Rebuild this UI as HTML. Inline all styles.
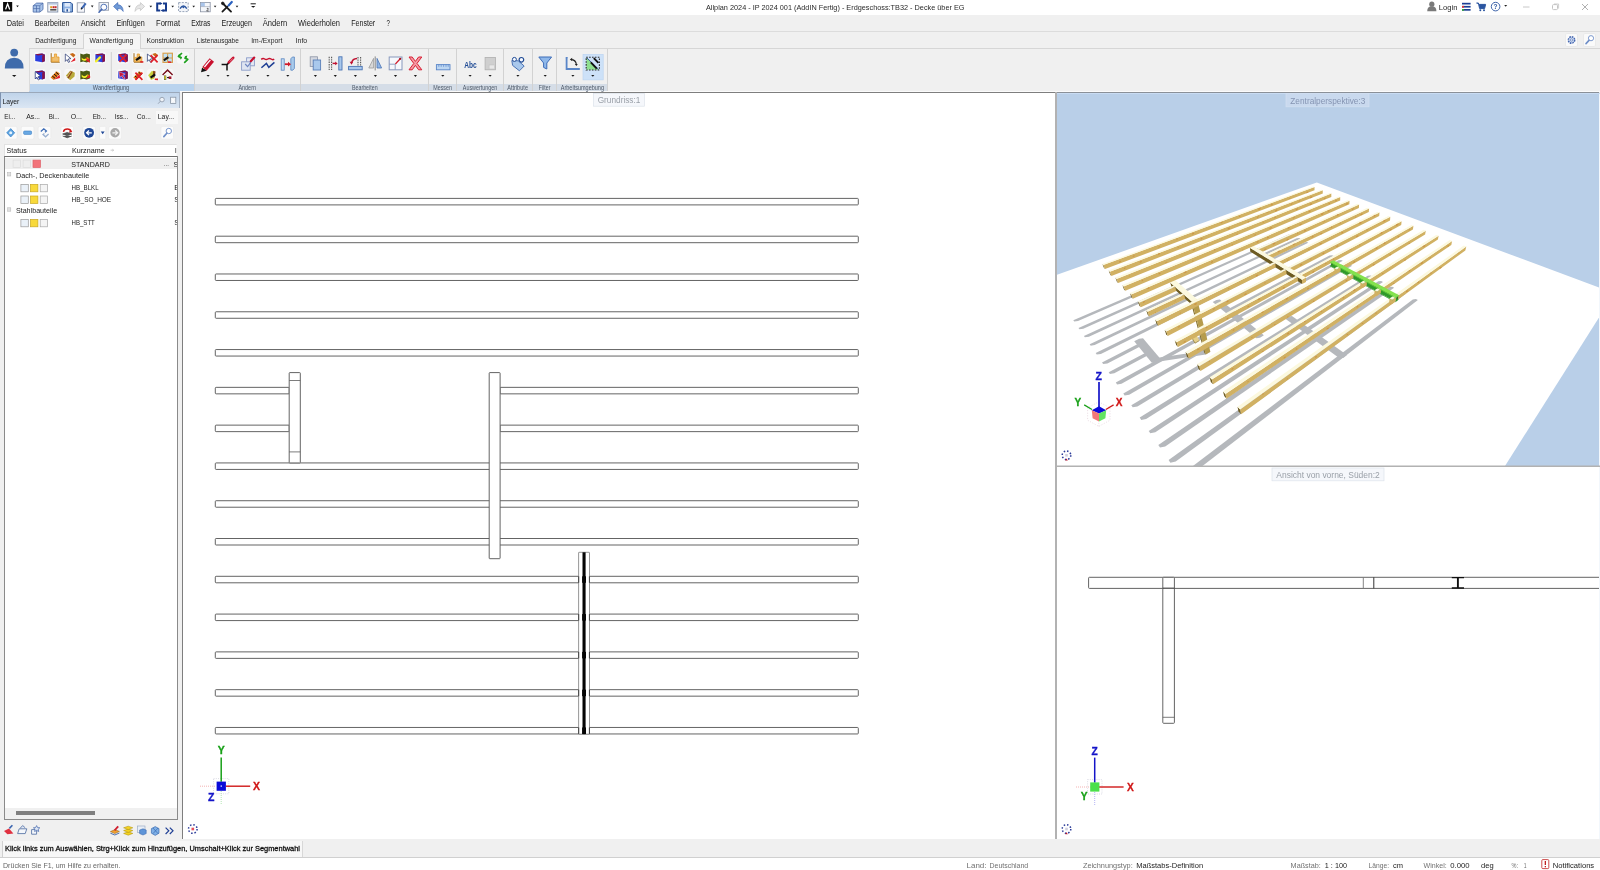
<!DOCTYPE html>
<html><head><meta charset="utf-8"><title>Allplan 2024</title>
<style>
html,body{margin:0;padding:0;}
body{width:1600px;height:870px;overflow:hidden;background:#f0f0f0;font-family:"Liberation Sans", sans-serif;position:relative;}
svg text{font-family:"Liberation Sans", sans-serif;}
</style></head><body>
<div style="position:absolute;left:0px;top:0px;width:1600px;height:14.5px;background:#ffffff;"></div>
<div style="position:absolute;left:0px;top:14.5px;width:1600px;height:77.5px;background:#f0f0f0;"></div>
<div style="position:absolute;left:0px;top:31px;width:1600px;height:1px;background:#dcdcdc;"></div>
<div style="position:absolute;left:29px;top:47.5px;width:1571px;height:1px;background:#d6d6d6;"></div>
<div style="position:absolute;left:83px;top:33px;width:57.5px;height:15.5px;background:#f5f5f5;border:1px solid #d4d4d4;border-bottom:none;border-radius:2px 2px 0 0;box-sizing:border-box;"></div>
<div style="position:absolute;left:29px;top:84px;width:578px;height:8px;background:#d5dde7;"></div>
<div style="position:absolute;left:29px;top:84px;width:165px;height:8px;background:#b9d3ee;"></div>
<div style="position:absolute;left:193.5px;top:49px;width:1px;height:42px;background:#d2d2d2;"></div>
<div style="position:absolute;left:300.3px;top:49px;width:1px;height:42px;background:#d2d2d2;"></div>
<div style="position:absolute;left:428.3px;top:49px;width:1px;height:42px;background:#d2d2d2;"></div>
<div style="position:absolute;left:456.3px;top:49px;width:1px;height:42px;background:#d2d2d2;"></div>
<div style="position:absolute;left:502.7px;top:49px;width:1px;height:42px;background:#d2d2d2;"></div>
<div style="position:absolute;left:531.5px;top:49px;width:1px;height:42px;background:#d2d2d2;"></div>
<div style="position:absolute;left:555.5px;top:49px;width:1px;height:42px;background:#d2d2d2;"></div>
<div style="position:absolute;left:606.7px;top:49px;width:1px;height:42px;background:#d2d2d2;"></div>
<div style="position:absolute;left:29px;top:49px;width:1px;height:42px;background:#dadada;"></div>
<div style="position:absolute;left:180px;top:90.6px;width:1420px;height:1.4px;background:#fbfbfb;"></div>
<div style="position:absolute;left:0px;top:839.4px;width:1600px;height:18.1px;background:#f0f0f0;"></div>
<div style="position:absolute;left:2px;top:841px;width:301px;height:15.5px;background:#f7f7f7;border-right:1px solid #d8d8d8;border-left:1px solid #d0d0d0;box-sizing:border-box;"></div>
<div style="position:absolute;left:0px;top:857.2px;width:1600px;height:12.8px;background:#ffffff;border-top:1.3px solid #d0d0d0;box-sizing:border-box;"></div>
<div style="position:absolute;left:0px;top:92px;width:182px;height:747.4px;background:#f0f0f0;"></div>
<div style="position:absolute;left:0px;top:92.4px;width:179.8px;height:15.5px;background:linear-gradient(#c0d4ea,#dbe6f3);border-right:1px solid #a8b4c4;border-top:1px solid #9aa8ba;border-left:1px solid #7f93b0;box-sizing:border-box;"></div>
<div style="position:absolute;left:155.5px;top:110.5px;width:22px;height:13px;background:#f8f8f8;"></div>
<div style="position:absolute;left:4px;top:144.3px;width:174px;height:12.4px;background:#ffffff;border:1px solid #e2e2e2;border-bottom:none;box-sizing:border-box;"></div>
<div style="position:absolute;left:4px;top:156px;width:174px;height:664px;background:#ffffff;border:1px solid #8a8a8a;border-top:1.4px solid #6e6e6e;box-sizing:border-box;"></div>
<div style="position:absolute;left:5px;top:157.6px;width:172px;height:11.6px;background:#efefef;"></div>
<div style="position:absolute;left:5px;top:808px;width:172px;height:11px;background:#f0f0f0;"></div>
<div style="position:absolute;left:16px;top:810.6px;width:78.8px;height:4.4px;background:#7f7f7f;"></div>
<div style="position:absolute;left:182px;top:92px;width:873.2px;height:747.4px;background:#ffffff;border-left:1px solid #7e7e7e;border-top:1px solid #7e7e7e;box-sizing:border-box;"></div>
<div style="position:absolute;left:1057px;top:92px;width:542px;height:375px;background:#b9cfe8;border-top:1px solid #8a9098;box-sizing:border-box;"></div>
<div style="position:absolute;left:1055px;top:92px;width:2px;height:747.4px;background:#b2b2b2;"></div>
<div style="position:absolute;left:1057px;top:467px;width:543px;height:372.4px;background:#ffffff;"></div>
<div style="position:absolute;left:1599px;top:93px;width:1px;height:746.4px;background:#f2f7fc;"></div>
<svg width="1600" height="870" viewBox="0 0 1600 870" style="position:absolute;left:0;top:0;will-change:transform">
<circle cx="1431.8" cy="4.2" r="2.6" fill="#7a7a7a"/><path d="M1427.2 11.2 q0-5 4.6-5 q4.6 0 4.6 5z" fill="#7a7a7a"/>
<rect x="1462" y="2.8" width="8.6" height="1.7" fill="#1c3f94"/><rect x="1462" y="5.9" width="8.6" height="1.7" fill="#1c3f94"/><rect x="1462" y="9" width="8.6" height="1.7" fill="#1c3f94"/><rect x="1462" y="5.9" width="2" height="1.7" fill="#d33"/><rect x="1462" y="9" width="2" height="1.7" fill="#3a3"/>
<path d="M1476.4 3 h2 l1.2 5.6 h5 l1-4.2 h-6.6" fill="#2b55a0" stroke="#2b55a0" stroke-width="1" stroke-linejoin="round"/><circle cx="1480.3" cy="10.2" r="1" fill="#2b55a0"/><circle cx="1484" cy="10.2" r="1" fill="#2b55a0"/>
<circle cx="1495.6" cy="6.6" r="4.3" fill="#fff" stroke="#2b55a0" stroke-width="0.9"/>
<path d="M1504.2 5 h3 l-1.5 1.8z" fill="#222"/>
<path d="M1523 7 h6.5" stroke="#c8c8c8" stroke-width="1"/><rect x="1552.5" y="4.6" width="5" height="5" rx="1" fill="none" stroke="#c4c4c4" stroke-width="1"/><path d="M1554 4 h4.6 v4.6" fill="none" stroke="#c4c4c4" stroke-width="0.8"/><path d="M1582 4 l6 6 M1588 4 l-6 6" stroke="#a8a8a8" stroke-width="0.9"/>
<rect x="1565.5" y="33.5" width="12" height="13" rx="1.5" fill="#fafafa" stroke="#e4e4e4" stroke-width="0.6"/><rect x="1583.5" y="33.5" width="12" height="13" rx="1.5" fill="#fafafa" stroke="#e4e4e4" stroke-width="0.6"/>
<circle cx="1571.5" cy="40" r="3.2" fill="#c9d6ee" stroke="#4668b0" stroke-width="1.5" stroke-dasharray="1.6 0.9"/><circle cx="1571.5" cy="40" r="1.1" fill="#fff" stroke="#4668b0" stroke-width="0.6"/>
<circle cx="1591" cy="38.2" r="2.6" fill="#fff" stroke="#6f8fc8" stroke-width="0.9"/><path d="M1589 40.4 l-3 3.2" stroke="#6f8fc8" stroke-width="1.6" stroke-linecap="round"/>
<rect x="1541.8" y="859.6" width="7" height="9" rx="1" fill="#fff" stroke="#c02020" stroke-width="0.8"/><rect x="1544.7" y="861" width="1.3" height="4" fill="#c02020"/><rect x="1544.7" y="866" width="1.3" height="1.3" fill="#c02020"/>
<rect x="3.1" y="2" width="9.1" height="9.4" fill="#0a0a0a"/><path d="M5.6 9.4 l2-5.6 l2.1 5.6" fill="none" stroke="#fff" stroke-width="1.3"/>
<path d="M16.2 5.3999999999999995 h2.6 l-1.3 1.9z" fill="#1a1a1a"/>
<g transform="translate(38.2,7.2) scale(1)"><path d="M-5 -1.5 l3.4-2.6 h6.4 v6.4 l-3.2 2.6 h-6.6z" fill="#a9c4ea" stroke="#4a6aa8" stroke-width="0.8"/><path d="M-5 1.4 h6.6 M-1.7 -1.6 v6.6 M1.6 -1.6 l3.2-2.5 M-5 -1.5 h6.6 v6.4" fill="none" stroke="#4a6aa8" stroke-width="0.7"/></g>
<g transform="translate(52.8,7.2) scale(1)"><rect x="-5" y="-4.6" width="10" height="9.4" fill="#f4f6fa" stroke="#7f8fa8" stroke-width="0.9"/><rect x="-5" y="-4.6" width="10" height="2" fill="#b8c6dc"/><rect x="-2.6" y="-1" width="2" height="2" fill="#e0a020"/><rect x="-0.2" y="-1" width="2" height="2" fill="#d02828"/><rect x="2" y="-1" width="1.8" height="2" fill="#c03030"/><rect x="-2.6" y="1.8" width="6.2" height="1.6" fill="#555"/></g>
<g transform="translate(67.4,7.2) scale(1)"><path d="M-4.8 -4.6 h8.4 l1.4 1.4 v8 h-9.8z" fill="#8fb2e2" stroke="#2b5498" stroke-width="1"/><rect x="-2.8" y="-4.2" width="5.6" height="3.6" fill="#dfeafa"/><rect x="-2.6" y="1.2" width="5.2" height="3.4" fill="#e6eefb"/><rect x="-1" y="2" width="1.6" height="2.4" fill="#2b5498"/></g>
<g transform="translate(81.6,7.2) scale(1)"><rect x="-4.4" y="-4.4" width="7.4" height="9.4" fill="#f6f7fa" stroke="#8a93a4" stroke-width="0.8"/><path d="M0 1.4 l4.2-5.2" stroke="#3b66b4" stroke-width="2"/><path d="M-0.6 2.2 l1-1.6" stroke="#222" stroke-width="1.2"/></g>
<path d="M90.9 5.6 h2.6 l-1.3 1.9z" fill="#1a1a1a"/>
<g transform="translate(103.6,7.2) scale(1)"><rect x="-4.6" y="-4.6" width="9.6" height="7.6" fill="#f2f4f8" stroke="#8a93a4" stroke-width="0.8"/><circle cx="0.2" cy="0" r="3" fill="#fdfdff" stroke="#5577b8" stroke-width="1"/><path d="M-2 2.2 l-2.6 2.8" stroke="#4668b0" stroke-width="1.6" stroke-linecap="round"/></g>
<g transform="translate(118.4,7.2) scale(1)"><path d="M-4.8 -0.8 l4.2-3.8 v2.2 q5 0 5.4 6.6 q-1.8-3.4-5.4-3 v2.2z" fill="#6f9ad6" stroke="#3b66b4" stroke-width="0.7"/></g>
<path d="M128.1 5.699999999999999 h2.6 l-1.3 1.9z" fill="#1a1a1a"/>
<g transform="translate(139.8,7.2) scale(1)"><path d="M4.8 -0.8 l-4.2-3.8 v2.2 q-5 0 -5.4 6.6 q1.8-3.4 5.4-3 v2.2z" fill="#e6e6e6" stroke="#c2c2c2" stroke-width="0.7"/></g>
<path d="M149.5 5.699999999999999 h2.6 l-1.3 1.9z" fill="#1a1a1a"/>
<g transform="translate(161.6,7.0) scale(1)"><path d="M-1.4 -3.6 h-3 v7.2 h3 M1.4 -3.6 h3 v7.2 h-3" fill="none" stroke="#163a8c" stroke-width="2"/><path d="M-1.8 -5 l2.8 1.4 l-2.8 1.6z M1.8 5 l-2.8-1.4 l2.8-1.6z" fill="#163a8c"/></g>
<path d="M171.39999999999998 5.699999999999999 h2.6 l-1.3 1.9z" fill="#1a1a1a"/>
<g transform="translate(183.4,7.0) scale(1)"><rect x="-4.8" y="-4.4" width="9.6" height="9" fill="#f4f6fa" stroke="#7f8fa8" stroke-width="0.8" stroke-dasharray="2 1.2"/><path d="M-3.4 1.6 q3.4-5 6.8 0" fill="none" stroke="#2b55a0" stroke-width="1.5"/><circle cx="0" cy="0.2" r="1" fill="#2b55a0"/></g>
<path d="M192.39999999999998 5.699999999999999 h2.6 l-1.3 1.9z" fill="#1a1a1a"/>
<g transform="translate(205.2,7.0) scale(1)"><rect x="-4.8" y="-4.6" width="9.8" height="9.4" fill="#f4f6fa" stroke="#8a93a4" stroke-width="0.8"/><rect x="-4.4" y="-4.2" width="4" height="3.6" fill="#a9c4ea"/><path d="M-4.8 -0.4 h9.8" stroke="#8a93a4" stroke-width="0.5"/><path d="M1.6 1.6 q1.6-1 1.6 0.4 l-1.8 2 h2.2" fill="none" stroke="#333" stroke-width="0.7"/></g>
<path d="M213.79999999999998 5.699999999999999 h2.6 l-1.3 1.9z" fill="#1a1a1a"/>
<g transform="translate(227,7.0) scale(1)"><path d="M-4.6 -4 l8.6 8.6" stroke="#1a1a1a" stroke-width="1.9" stroke-linecap="round"/><path d="M-4.6 4.6 l5-5" stroke="#1a1a1a" stroke-width="1.7" stroke-linecap="round"/><path d="M1.6 -1.6 l3.2-3.4" stroke="#2b62c0" stroke-width="2.2" stroke-linecap="round"/><circle cx="-4.2" cy="-3.6" r="1.3" fill="none" stroke="#1a1a1a" stroke-width="1"/></g>
<path d="M235.7 5.699999999999999 h2.6 l-1.3 1.9z" fill="#1a1a1a"/>
<path d="M250.6 3.8 h5.2" stroke="#1a1a1a" stroke-width="1"/>
<path d="M251.0 5.8999999999999995 h4.4 l-2.2 1.9z" fill="#1a1a1a"/>
<circle cx="14.2" cy="52.6" r="3.9" fill="#3f6bab"/><path d="M4.8 68.4 q0-10.6 9.4-10.6 q9.4 0 9.4 10.6z" fill="#3f6bab"/>
<path d="M12.0 75.0 h4.4 l-2.2 1.9z" fill="#1a1a1a"/>
<rect x="34" y="51.8" width="12" height="12" rx="3" fill="#fafafa" opacity="0.75"/>
<rect x="49.2" y="51.8" width="12" height="12" rx="3" fill="#fafafa" opacity="0.75"/>
<rect x="64.3" y="51.8" width="12" height="12" rx="3" fill="#fafafa" opacity="0.75"/>
<rect x="79.1" y="51.8" width="12" height="12" rx="3" fill="#fafafa" opacity="0.75"/>
<rect x="94.2" y="51.8" width="12" height="12" rx="3" fill="#fafafa" opacity="0.75"/>
<rect x="117" y="51.8" width="12" height="12" rx="3" fill="#fafafa" opacity="0.75"/>
<rect x="132" y="51.8" width="12" height="12" rx="3" fill="#fafafa" opacity="0.75"/>
<rect x="146.8" y="51.8" width="12" height="12" rx="3" fill="#fafafa" opacity="0.75"/>
<rect x="161.6" y="51.8" width="12" height="12" rx="3" fill="#fafafa" opacity="0.75"/>
<rect x="177" y="51.8" width="12" height="12" rx="3" fill="#fafafa" opacity="0.75"/>
<rect x="34" y="69.0" width="12" height="12" rx="3" fill="#fafafa" opacity="0.75"/>
<rect x="49.2" y="69.0" width="12" height="12" rx="3" fill="#fafafa" opacity="0.75"/>
<rect x="64.3" y="69.0" width="12" height="12" rx="3" fill="#fafafa" opacity="0.75"/>
<rect x="79.1" y="69.0" width="12" height="12" rx="3" fill="#fafafa" opacity="0.75"/>
<rect x="117" y="69.0" width="12" height="12" rx="3" fill="#fafafa" opacity="0.75"/>
<rect x="132" y="69.0" width="12" height="12" rx="3" fill="#fafafa" opacity="0.75"/>
<rect x="146.8" y="69.0" width="12" height="12" rx="3" fill="#fafafa" opacity="0.75"/>
<rect x="161.6" y="69.0" width="12" height="12" rx="3" fill="#fafafa" opacity="0.75"/>
<g transform="translate(40,57.8) scale(1)"><path d="M-4.8 -3.6 l7-0.8 l2.6 1.2 v6.6 l-2.6 1 l-7-1.2z" fill="#2a3fe0"/><path d="M-4.8 -3.6 l7-0.8 l2.6 1.2 l-7 0.8z" fill="#8a1244"/><path d="M2.2 -2.4 l2.6-0.8 v6.6 l-2.6 1z" fill="#8a1244"/></g>
<g transform="translate(55.2,57.8) scale(1)"><path d="M-4 -4.6 v9 h8.6" fill="none" stroke="#a06a18" stroke-width="1"/><path d="M-3.4 3.6 v-4 h2.6 v-3.4 h2.2 v3 h2.4 v4.4z" fill="#f0c070" stroke="#e69a28" stroke-width="0.8"/></g>
<g transform="translate(70.3,57.8) scale(1)"><path d="M-5.0 -3.8000000000000003 l5.6 4.6 l-2.6 0.4 l1.4 2.8 l-1.3 0.6 l-1.4-2.8 l-1.7 1.8z" fill="#fff" stroke="#1c2e6a" stroke-width="0.7"/><path d="M-0.6 -3.8 l3.2-1 l2.6 2 l-2 2.4z" fill="#c86a18"/><path d="M0.2 4.4 l4.6-4.6 l0.2 3z" fill="#e0202a"/></g>
<g transform="translate(85.1,57.8) scale(1)"><path d="M-4.8 -4.2 l3 0.8 l3.4-1 l3.2 0.8 v7 l-3.2 1.2 l-3.4-0.8 l-3 0.6z" fill="#4a5a12"/><path d="M-3.4 -0.4 q2.4 3.6 6 -0.6 l-0.4 2.8 q-3 2.4-5.6 0z" fill="#f4f02a"/><path d="M1 0 l3.6 4.4 M1.4 3.4 l3-2.6" stroke="#e0202a" stroke-width="1.4"/><path d="M1 0.6 l2.2-1.2 l0.6 2z" fill="#f08a18"/></g>
<g transform="translate(100.2,57.8) scale(1)"><path d="M-4.8 -3.6 l7-0.8 l2.6 1.2 v6.6 l-2.6 1 l-7-1.2z" fill="#2a3fe0"/><path d="M-4.8 -3.6 l7-0.8 l2.6 1.2 l-7 0.8z" fill="#8a1244"/><path d="M2.2 -2.4 l2.6-0.8 v6.6 l-2.6 1z" fill="#8a1244"/><path d="M-4.2 3.6 l4-4" stroke="#f4f02a" stroke-width="2.2" stroke-linecap="round"/></g>
<g transform="translate(40,75.0) scale(1)"><path d="M-4.8 -3.6 l7-0.8 l2.6 1.2 v6.6 l-2.6 1 l-7-1.2z" fill="#2a3fe0"/><path d="M-4.8 -3.6 l7-0.8 l2.6 1.2 l-7 0.8z" fill="#8a1244"/><path d="M2.2 -2.4 l2.6-0.8 v6.6 l-2.6 1z" fill="#8a1244"/><path d="M-4.800000000000001 -3.4000000000000004 l5.6 4.6 l-2.6 0.4 l1.4 2.8 l-1.3 0.6 l-1.4-2.8 l-1.7 1.8z" fill="#fff" stroke="#1c2e6a" stroke-width="0.7"/></g>
<g transform="translate(55.2,75.0) scale(1)"><path d="M-4.6 2.6 l6-6.4 l3.2 2.4 l-6 6.4z" fill="#e07a18"/><path d="M-3 1 l3 2.4 M-1.2 -0.9 l3 2.4 M0.6 -2.8 l3 2.4" stroke="#1c1208" stroke-width="1"/><path d="M-1 4.6 l5.4-5 l0.4 3.4z" fill="#e0202a"/></g>
<g transform="translate(70.3,75.0) scale(1)"><path d="M-4.4 0.4 l4.4-4.6 l4.6 2 l-0.4 3.6 l-4.4 3.8z" fill="#b9aa3c"/><path d="M0 -4.2 l2.4 1 l-4.2 7 l-1.6-1.6z" fill="#8a4a14"/><path d="M0.8 -3.8 l-4 6.4" stroke="#f0dc90" stroke-width="0.8"/></g>
<g transform="translate(85.1,75.0) scale(1)"><path d="M-4.8 -4.2 l3 0.8 l3.4-1 l3.2 0.8 v7 l-3.2 1.2 l-3.4-0.8 l-3 0.6z" fill="#4a5a12"/><path d="M-3.4 -0.4 q2.4 3.6 6 -0.6 l-0.4 2.8 q-3 2.4-5.6 0z" fill="#f4f02a"/><path d="M0.6 3.8 l4.2-4.2 l0.4 3z" fill="#e0202a"/><path d="M1.4 0.6 l2-1.2 l0.4 1.8z" fill="#f08a18"/></g>
<path d="M111.3 52 v28" stroke="#d0d0d0" stroke-width="1"/>
<g transform="translate(123,57.8) scale(1)"><path d="M-4.8 -3.6 l7-0.8 l2.6 1.2 v6.6 l-2.6 1 l-7-1.2z" fill="#2a3fe0"/><path d="M-4.8 -3.6 l7-0.8 l2.6 1.2 l-7 0.8z" fill="#8a1244"/><path d="M2.2 -2.4 l2.6-0.8 v6.6 l-2.6 1z" fill="#8a1244"/><path d="M-3.6 -3.2 l7 7.2 M3.4 -3.2 l-7 7.2" stroke="#e0202a" stroke-width="1.7"/></g>
<g transform="translate(138,57.8) scale(1)"><path d="M-4 -4.6 v9 h8.6" fill="none" stroke="#a06a18" stroke-width="1"/><path d="M-3.4 3.6 v-4 h2.6 v-3.4 h2.2 v3 h2.4 v4.4z" fill="#f0c070" stroke="#e69a28" stroke-width="0.8"/><path d="M-2 2.4 l4.6-3.2" stroke="#111" stroke-width="2.2"/><path d="M2.2 4.0 l3.2 0.2" stroke="#e0202a" stroke-width="1.6"/></g>
<g transform="translate(152.8,57.8) scale(1)"><path d="M-5.4 -3.8000000000000003 l5.6 4.6 l-2.6 0.4 l1.4 2.8 l-1.3 0.6 l-1.4-2.8 l-1.7 1.8z" fill="#fff" stroke="#1c2e6a" stroke-width="0.7"/><path d="M-0.6 -3.8 l3.2-1 l2.6 2 l-2 2.4z" fill="#c86a18"/><path d="M-2.2 -2.6 l7 7.2 M4.8 -2.6 l-7 7.2" stroke="#e0202a" stroke-width="1.7"/></g>
<g transform="translate(167.6,57.8) scale(1)"><rect x="-4.6" y="-4.6" width="9.4" height="9.2" fill="#bfe0f4" stroke="#d8a050" stroke-width="1.2"/><path d="M0 -4.6 v9.2 M-4.6 0.2 h9.4" stroke="#d8a050" stroke-width="1.1"/><path d="M-3.8 2.6 l4.6-3.2" stroke="#111" stroke-width="2.2"/><path d="M0.3999999999999999 4.2 l3.2 0.2" stroke="#e0202a" stroke-width="1.6"/></g>
<g transform="translate(183,57.8) scale(1)"><path d="M-1 -4.8 l-3.6 3.4 l2.8 1.2 l-1 1.4" fill="none" stroke="#1fa01f" stroke-width="1.7" stroke-linejoin="round"/><path d="M-4.9 -1.8 l1 -2.2 l1.6 2.4z" fill="#1fa01f"/><path d="M1.2 5 l3.6-3.4 l-2.8-1.2 l1-1.4" fill="none" stroke="#1fa01f" stroke-width="1.7" stroke-linejoin="round"/><path d="M1.6 -1.6 l2.8-0.6 l-0.8 2.4z" fill="#1fa01f"/></g>
<g transform="translate(123,75.0) scale(1)"><path d="M-4.8 -3.6 l7-0.8 l2.6 1.2 v6.6 l-2.6 1 l-7-1.2z" fill="#2a3fe0"/><path d="M-4.8 -3.6 l7-0.8 l2.6 1.2 l-7 0.8z" fill="#8a1244"/><path d="M2.2 -2.4 l2.6-0.8 v6.6 l-2.6 1z" fill="#8a1244"/><path d="M-4.2 -3.4 l6.4 2.6 l-2.6 0.8 l2.4 3.4 l-1.4 0.8 l-2.2-3.4 l-1.6 1.8z" fill="#c8143a" stroke="#fff" stroke-width="0.4"/></g>
<g transform="translate(138,75.0) scale(1)"><path d="M-4.6 2.6 l6-6.4 l3.2 2.4 l-6 6.4z" fill="#e07a18"/><path d="M-3 1 l3 2.4 M-1.2 -0.9 l3 2.4 M0.6 -2.8 l3 2.4" stroke="#1c1208" stroke-width="1"/><path d="M-2.6 -2.4000000000000004 l7 7.2 M4.4 -2.4000000000000004 l-7 7.2" stroke="#e0202a" stroke-width="1.7"/></g>
<g transform="translate(152.8,75.0) scale(1)"><path d="M-4.6 0.2 l3.6-4.2 l3 0.6 l-0.6 7 l-3.2 1.4z" fill="#c8d040"/><path d="M0.4 -4.2 l2.4 0.8 l-1 6 l-2-0.6z" fill="#8a4a14"/><path d="M-2.2 2.6 l4.6-3.2" stroke="#111" stroke-width="2.2"/><path d="M2.0 4.2 l3.2 0.2" stroke="#e0202a" stroke-width="1.6"/></g>
<g transform="translate(167.6,75.0) scale(1)"><path d="M-5 0 l5-4.8 l5 4.8" fill="none" stroke="#7a1420" stroke-width="1.6"/><path d="M-3.6 -0.2 v5 h7.2 v-5 l-3.6-3.4z" fill="#fbf6f0"/><rect x="-3.4" y="0.8" width="1.8" height="4" fill="#e8e020" stroke="#333" stroke-width="0.4"/><rect x="1" y="1.4" width="2.8" height="2.6" fill="#a01830"/><path d="M-0.6 2.6 h2" stroke="#111" stroke-width="1"/></g>
<g transform="translate(207.8,63.8) scale(1)"><path d="M-5.6 3.4 l7.4-9 l4.4 3.6 l-7.4 9z" fill="#c8102e"/><path d="M-3.4 3.2 l6-7.2" stroke="#fff" stroke-width="1.2"/><path d="M-5.6 3.4 l4.4 3.6 l-5.6 1.4z" fill="#111"/><path d="M-5.6 3.4 l1.6 1.4" stroke="#f0e0b0" stroke-width="0.8"/></g>
<g transform="translate(227.6,63.8) scale(1)"><path d="M-6 0.8 h5.4 v5.8 M-0.6 0.8 l2-2" fill="none" stroke="#111" stroke-width="1.5"/><path d="M1.2 -1.4 l4.4-4.6" stroke="#c8102e" stroke-width="2.6" stroke-linecap="round"/><path d="M2.2 -2.2 l3-3.2" stroke="#f6b0b8" stroke-width="0.7"/></g>
<g transform="translate(248.2,63.8) scale(1)"><rect x="-1.6" y="-6" width="7.8" height="8" fill="#e4e9f4" stroke="#8b9cc8" stroke-width="0.9"/><rect x="-6.6" y="-2" width="8.6" height="8.4" fill="#dfe5f1" stroke="#8b9cc8" stroke-width="0.9"/><path d="M-3 0.2 l2.4 2.6 l3.4-4.4" fill="none" stroke="#6f86c0" stroke-width="1.2"/><path d="M2.6 -2.6 l3.4-3.6" stroke="#c8102e" stroke-width="2.2" stroke-linecap="round"/></g>
<g transform="translate(267.8,63.8) scale(1)"><path d="M-6.6 -4.4 q1.8-1.6 3.4-0.4 t3.2 0 t3.2 0 t3.2 0.2" fill="none" stroke="#c8102e" stroke-width="1.5"/><path d="M-6.4 4 l5-4.4 l2.4 4 l5.6-5" fill="none" stroke="#1f3f94" stroke-width="1.5"/></g>
<g transform="translate(287.8,63.8) scale(1)"><rect x="-6.6" y="-5" width="3" height="11.4" fill="#c4dcf4" stroke="#5a86c0" stroke-width="0.8"/><path d="M3 -5 l1.6-1.8 h2 v11.4 l-1.6 1.8 h-2z" fill="#a9cbec" stroke="#5a86c0" stroke-width="0.8"/><path d="M-3 0.4 h4" stroke="#d01828" stroke-width="1.8"/><path d="M0.2 -2 l3 2.4 l-3 2.4z" fill="#d01828"/></g>
<path d="M206.5 74.89999999999999 h3.2 l-1.6 1.9z" fill="#1a1a1a"/>
<path d="M226.3 74.89999999999999 h3.2 l-1.6 1.9z" fill="#1a1a1a"/>
<path d="M246.1 74.89999999999999 h3.2 l-1.6 1.9z" fill="#1a1a1a"/>
<path d="M266.29999999999995 74.89999999999999 h3.2 l-1.6 1.9z" fill="#1a1a1a"/>
<path d="M286.2 74.89999999999999 h3.2 l-1.6 1.9z" fill="#1a1a1a"/>
<g transform="translate(315.4,63.4) scale(1)"><rect x="-5.2" y="-6.6" width="7.2" height="9.6" fill="#d4d8e0" stroke="#8a92a4" stroke-width="0.8"/><rect x="-2.2" y="-3.4" width="7.4" height="10" fill="#a9c8ec" stroke="#5a7fb8" stroke-width="0.9"/></g>
<g transform="translate(335.2,63.4) scale(1)"><path d="M-6 -6.6 v13.2 M-3.6 -6.6 v13.2" stroke="#555" stroke-width="1.1" stroke-dasharray="1.4 1"/><path d="M-2.6 0 h3.2" stroke="#c01030" stroke-width="1.4"/><path d="M0 -1.8 l2.4 1.8 l-2.4 1.8z" fill="#c01030"/><rect x="3.6" y="-6.6" width="3.2" height="13.2" fill="#a9c8ec" stroke="#4a74b4" stroke-width="0.9"/></g>
<g transform="translate(355.4,63.4) scale(1)"><path d="M2.6 -6.4 v9 M5.2 -6.4 v9" stroke="#555" stroke-width="1.1" stroke-dasharray="1.4 1"/><rect x="-6.8" y="3" width="13.6" height="3.4" fill="#a9c8ec" stroke="#4a74b4" stroke-width="0.9"/><path d="M1.6 -5 q-4.6 0.2-5.4 4.4" fill="none" stroke="#c01030" stroke-width="1.5"/><path d="M-5.8 -1.6 l2 3 l1.6-3z" fill="#c01030"/></g>
<g transform="translate(375.2,63.4) scale(1)"><path d="M0 -7 v14" stroke="#7a7a7a" stroke-width="0.9"/><path d="M-1.6 -5 v9.6 h-4.8z" fill="#d8d8d8" stroke="#9a9a9a" stroke-width="0.8"/><path d="M1.8 -5 v9.6 h4.6z" fill="#8fb4e4" stroke="#4a74b4" stroke-width="0.8"/></g>
<g transform="translate(395.6,63.4) scale(1)"><rect x="-6.4" y="-6.4" width="12.8" height="12.8" fill="#f6f8fc" stroke="#8798bc" stroke-width="1"/><path d="M-6.4 0.8 h6 v5.6" fill="none" stroke="#8798bc" stroke-width="0.9"/><path d="M-0.2 0.6 l4.6-5" stroke="#d02030" stroke-width="1.2"/><circle cx="4.6" cy="-4.6" r="1.1" fill="#a01020"/></g>
<g transform="translate(415.4,63.4) scale(1)"><path d="M-6.4 -6.4 h3.2 l3.2 4.4 l3.2-4.4 h3.2 l-4.8 6.4 l4.8 6.4 h-3.2 l-3.2-4.4 l-3.2 4.4 h-3.2 l4.8-6.4z" fill="#f49aa4" stroke="#d81e34" stroke-width="1"/></g>
<path d="M313.79999999999995 75.1 h3.2 l-1.6 1.9z" fill="#1a1a1a"/>
<path d="M333.7 75.1 h3.2 l-1.6 1.9z" fill="#1a1a1a"/>
<path d="M353.79999999999995 75.1 h3.2 l-1.6 1.9z" fill="#1a1a1a"/>
<path d="M373.79999999999995 75.1 h3.2 l-1.6 1.9z" fill="#1a1a1a"/>
<path d="M393.9 75.1 h3.2 l-1.6 1.9z" fill="#1a1a1a"/>
<path d="M413.79999999999995 75.1 h3.2 l-1.6 1.9z" fill="#1a1a1a"/>
<g transform="translate(443.2,67.2) scale(1)"><rect x="-6.8" y="-2.6" width="13.6" height="5.2" fill="#bcd6f2" stroke="#5a86c8" stroke-width="0.9"/><path d="M-4.4 -2.6 v2.2 M-2 -2.6 v2.2 M0.4 -2.6 v2.2 M2.8 -2.6 v2.2 M5 -2.6 v2.2" stroke="#5a86c8" stroke-width="0.7"/></g>
<g transform="translate(490.3,63.6) scale(1)"><rect x="-5.2" y="-6.2" width="10.4" height="12.4" fill="#cfcfcf" stroke="#b0b0b0" stroke-width="0.8"/><rect x="-1.2" y="1.4" width="5.6" height="4" fill="#e8e8e8" stroke="#bdbdbd" stroke-width="0.5"/></g>
<g transform="translate(517.8,63.6) scale(1)"><path d="M-6 -3 l6.4 0.2 l6 5.2 l-4.8 4.8 l-6.8-5.4z" fill="#a9c8ec" stroke="#3d66ac" stroke-width="0.9"/><circle cx="-3.4" cy="-4.2" r="2" fill="#f4f8ff" stroke="#1f4a94" stroke-width="1"/><circle cx="3.6" cy="-3.8" r="2.3" fill="#f4f8ff" stroke="#1f4a94" stroke-width="1.2"/></g>
<g transform="translate(545.2,63.0) scale(1)"><path d="M-6.4 -6 h12.8 l-4.8 6 v6 l-3.2-1.6 v-4.4z" fill="#8fb8ea" stroke="#3d6cb8" stroke-width="1"/></g>
<g transform="translate(572.6,63.6) scale(1)"><path d="M-6 -6 v11.4 h12.6" fill="none" stroke="#5a86c8" stroke-width="1.8"/><path d="M-6.8 -6 h1.8 M6.6 4.4 v2" stroke="#5a86c8" stroke-width="1.2"/><path d="M-1.6 -4 q4.8 0 5.4 5" fill="none" stroke="#222" stroke-width="1.1"/><path d="M-2.8 -4.2 l2.4-1.6 v3.2z M3.8 2.4 l-1.6-2 h3z" fill="#222"/></g>
<rect x="583" y="54.3" width="20.2" height="25.6" fill="#cde1f8" stroke="#b9d2f0" stroke-width="0.6"/>
<g transform="translate(592.8,63.6) scale(1)"><path d="M-6.4 -6.2 l12.6 12.4 h-12.6z" fill="#8fe08f"/><rect x="-6.6" y="-6.4" width="13.2" height="12.8" fill="none" stroke="#2a2a2a" stroke-width="1.1" stroke-dasharray="1.6 1.3"/><path d="M-5.8 -5.6 l11.4 11.2" stroke="#1f3f94" stroke-width="0.8"/><path d="M-2 -1.2 l6 6.2 M1 -5.4 l4.6 4.6" stroke="#111" stroke-width="1.9"/></g>
<path d="M441.2 74.89999999999999 h3.2 l-1.6 1.9z" fill="#1a1a1a"/>
<path d="M468.5 74.89999999999999 h3.2 l-1.6 1.9z" fill="#1a1a1a"/>
<path d="M488.5 74.89999999999999 h3.2 l-1.6 1.9z" fill="#1a1a1a"/>
<path d="M516.3 74.89999999999999 h3.2 l-1.6 1.9z" fill="#1a1a1a"/>
<path d="M543.6 74.89999999999999 h3.2 l-1.6 1.9z" fill="#1a1a1a"/>
<path d="M571.3 74.89999999999999 h3.2 l-1.6 1.9z" fill="#1a1a1a"/>
<path d="M591.1999999999999 74.89999999999999 h3.2 l-1.6 1.9z" fill="#1a1a1a"/>
<g stroke="#8a96a6" stroke-width="0.8" fill="#eef2f7"><circle cx="162" cy="99.6" r="2.3"/><path d="M160.3 101.3 l-2.2 2.4"/><rect x="170.6" y="97.2" width="5.2" height="6.2"/></g><path d="M171.6 98.2 l3.2 4.2 m0-4.2 l-3.2 4.2" stroke="#fff" stroke-width="0.9"/>
<rect x="4.3999999999999995" y="126.4" width="12.6" height="12.8" rx="1.6" fill="#fbfbfb" stroke="#e6e6e6" stroke-width="0.5"/>
<rect x="21.3" y="126.4" width="12.6" height="12.8" rx="1.6" fill="#fbfbfb" stroke="#e6e6e6" stroke-width="0.5"/>
<rect x="38.2" y="126.4" width="12.6" height="12.8" rx="1.6" fill="#fbfbfb" stroke="#e6e6e6" stroke-width="0.5"/>
<rect x="60.900000000000006" y="126.4" width="12.6" height="12.8" rx="1.6" fill="#fbfbfb" stroke="#e6e6e6" stroke-width="0.5"/>
<rect x="82.8" y="126.4" width="12.6" height="12.8" rx="1.6" fill="#fbfbfb" stroke="#e6e6e6" stroke-width="0.5"/>
<rect x="108.7" y="126.4" width="12.6" height="12.8" rx="1.6" fill="#fbfbfb" stroke="#e6e6e6" stroke-width="0.5"/>
<rect x="160.89999999999998" y="126.4" width="12.6" height="12.8" rx="1.6" fill="#fbfbfb" stroke="#e6e6e6" stroke-width="0.5"/>
<rect x="99.6" y="126.4" width="6.2" height="12.8" rx="1.2" fill="#fbfbfb" stroke="#e6e6e6" stroke-width="0.5"/>
<path d="M10.7 128.6 l4 4.2 l-4 4.2 l-4-4.2z" fill="#5ba3e0" stroke="#3a7fc4" stroke-width="0.7"/><circle cx="10.7" cy="132.8" r="1.5" fill="#e8f3fc"/>
<rect x="23.6" y="131" width="8" height="3.4" rx="1" fill="#6aa9e4" stroke="#3a7fc4" stroke-width="0.6"/>
<path d="M40.8 131.6 l3-2.8 l2.6 2.2 l-1.4 1.2" fill="none" stroke="#3d6cb6" stroke-width="1.3"/><path d="M48.6 134 l-3 2.8 l-2.6-2.2 l1.4-1.2" fill="none" stroke="#9ab0d0" stroke-width="1.3"/>
<path d="M63.4 131.8 a4 3.6 0 0 1 7.8 0" fill="none" stroke="#d01818" stroke-width="1.4"/><path d="M70 129.4 l2.4 2.6 l-3.4 0.8z" fill="#d01818"/><path d="M62.6 134 l4.6-1.6 l4.6 1.6 l-4.6 1.8z M62.6 136 l4.6 1.8 l4.6-1.8" fill="#555" stroke="#333" stroke-width="0.6"/>
<circle cx="89.1" cy="132.8" r="4.9" fill="#1f4796"/><path d="M91.8 132.8 h-5 m2.2-2.3 l-2.4 2.3 l2.4 2.3" stroke="#fff" stroke-width="1.3" fill="none"/>
<path d="M100.8 131.4 h3.8 l-1.9 2.8z" fill="#1f4796"/>
<circle cx="115" cy="132.8" r="4.7" fill="#a9a9a9"/><path d="M112.4 132.8 h5 m-2.2-2.3 l2.4 2.3 l-2.4 2.3" stroke="#f2f2f2" stroke-width="1.3" fill="none"/>
<circle cx="168.8" cy="131" r="2.7" fill="#fff" stroke="#6f8fc8" stroke-width="0.9"/><path d="M166.8 133.2 l-3 3.4" stroke="#6f8fc8" stroke-width="1.6" stroke-linecap="round"/>
<path d="M110.6 150.2 h3 m-1.2-1 l1.2 1 l-1.2 1" stroke="#b0b0b0" stroke-width="0.6" fill="none"/>
<rect x="13.1" y="160.1" width="7.4" height="7.4" fill="#eeeeee" stroke="#dcdcdc" stroke-width="0.7"/>
<rect x="23.1" y="160.1" width="7.4" height="7.4" fill="#eeeeee" stroke="#dcdcdc" stroke-width="0.7"/>
<rect x="33" y="160.1" width="7.4" height="7.4" fill="#f2737a" stroke="#e06068" stroke-width="0.7"/>
<rect x="7.6" y="172.6" width="3.2" height="3.4" fill="#e0e0e0" stroke="#b4b4b4" stroke-width="0.5"/>
<rect x="7.6" y="207.8" width="3.2" height="3.4" fill="#e0e0e0" stroke="#b4b4b4" stroke-width="0.5"/>
<rect x="20.9" y="184.4" width="7.4" height="7.4" fill="#eaf1f8" stroke="#9a9a9a" stroke-width="0.7"/>
<rect x="30.5" y="184.4" width="7.4" height="7.4" fill="#f8d93a" stroke="#c8a820" stroke-width="0.7"/>
<rect x="40.2" y="184.4" width="7.4" height="7.4" fill="#f4f4f4" stroke="#a8a8a8" stroke-width="0.7"/>
<rect x="20.9" y="196.0" width="7.4" height="7.4" fill="#eaf1f8" stroke="#9a9a9a" stroke-width="0.7"/>
<rect x="30.5" y="196.0" width="7.4" height="7.4" fill="#f8d93a" stroke="#c8a820" stroke-width="0.7"/>
<rect x="40.2" y="196.0" width="7.4" height="7.4" fill="#f4f4f4" stroke="#a8a8a8" stroke-width="0.7"/>
<rect x="20.9" y="219.4" width="7.4" height="7.4" fill="#eaf1f8" stroke="#9a9a9a" stroke-width="0.7"/>
<rect x="30.5" y="219.4" width="7.4" height="7.4" fill="#f8d93a" stroke="#c8a820" stroke-width="0.7"/>
<rect x="40.2" y="219.4" width="7.4" height="7.4" fill="#f4f4f4" stroke="#a8a8a8" stroke-width="0.7"/>
<path d="M4 831 l5-2.4 l4.4 5 l-6 0.6z" fill="#e03040"/><path d="M9.4 828.4 l3-3.2" stroke="#3b66b0" stroke-width="1.6"/>
<path d="M17.6 833.6 l1.6-4.8 h7.6 l-1.6 4.8z" fill="#f4f7fb" stroke="#49679e" stroke-width="0.8"/><path d="M20.2 828 l2.6-2.4 l2.4 2.2" fill="#dce6f4" stroke="#49679e" stroke-width="0.8"/>
<path d="M31.6 829.6 h5 v4.6 h-5z" fill="#f4f7fb" stroke="#49679e" stroke-width="0.8"/><path d="M36.6 825.6 l1 2 l2.2 0.2 l-1.6 1.5 l0.5 2.2 l-2.1-1.1 l-2 1.1 l0.4-2.2 l-1.6-1.5 l2.2-0.2z" fill="#dfe8f6" stroke="#3d62a8" stroke-width="0.7"/>
<path d="M110.4 831.6 l4.6-2 l4.4 1.8 l-4.6 2.2z" fill="#f0a030" stroke="#8a5a10" stroke-width="0.5"/><path d="M110.4 833.2 l4.4 1.8 l4.6-2" fill="none" stroke="#3d62a8" stroke-width="0.9"/><path d="M114.6 830.4 l3.6-4" stroke="#d02030" stroke-width="1.8"/>
<g fill="#f5d320" stroke="#a88a00" stroke-width="0.5"><path d="M123.6 833.4 l4.6-1.6 l4.6 1.6 l-4.6 1.8z"/><path d="M123.6 830.6 l4.6-1.6 l4.6 1.6 l-4.6 1.8z"/><path d="M123.6 827.8 l4.6-1.6 l4.6 1.6 l-4.6 1.8z"/></g>
<rect x="137.4" y="826" width="7.6" height="6.4" fill="#e8eef6" stroke="#8fa2c0" stroke-width="0.6"/><path d="M139.6 830 l3.4-1.2 l3.2 1.2 v3.6 l-3.2 1.4 l-3.4-1.4z" fill="#5f95d8" stroke="#2e5ea8" stroke-width="0.5"/>
<path d="M151.4 828.6 l3.8-2 l3.8 2 v4.6 l-3.8 2.2 l-3.8-2.2z" fill="#7fb0e6" stroke="#2e5ea8" stroke-width="0.6"/><path d="M153 828 l5 5.6 m0-5.6 l-5 5.6" stroke="#2e5ea8" stroke-width="0.6"/>
<path d="M165.6 827.6 l3.2 3.2 l-3.2 3.2 M169.8 827.6 l3.2 3.2 l-3.2 3.2" stroke="#1f3f94" stroke-width="1.2" fill="none"/>
<rect x="593.4" y="93.4" width="51" height="12.8" fill="#f5f7fb" stroke="#dde3ec" stroke-width="0.7"/>
<rect x="215.30" y="198.40" width="643.00" height="6.50" rx="0.8" fill="#fff" stroke="#5c5c5c" stroke-width="0.95"/>
<rect x="215.30" y="236.19" width="643.00" height="6.50" rx="0.8" fill="#fff" stroke="#5c5c5c" stroke-width="0.95"/>
<rect x="215.30" y="273.98" width="643.00" height="6.50" rx="0.8" fill="#fff" stroke="#5c5c5c" stroke-width="0.95"/>
<rect x="215.30" y="311.77" width="643.00" height="6.50" rx="0.8" fill="#fff" stroke="#5c5c5c" stroke-width="0.95"/>
<rect x="215.30" y="349.56" width="643.00" height="6.50" rx="0.8" fill="#fff" stroke="#5c5c5c" stroke-width="0.95"/>
<rect x="215.30" y="387.35" width="73.90" height="6.50" rx="0.8" fill="#fff" stroke="#5c5c5c" stroke-width="0.95"/>
<rect x="500.00" y="387.35" width="358.30" height="6.50" rx="0.8" fill="#fff" stroke="#5c5c5c" stroke-width="0.95"/>
<rect x="215.30" y="425.14" width="73.90" height="6.50" rx="0.8" fill="#fff" stroke="#5c5c5c" stroke-width="0.95"/>
<rect x="500.00" y="425.14" width="358.30" height="6.50" rx="0.8" fill="#fff" stroke="#5c5c5c" stroke-width="0.95"/>
<rect x="215.30" y="462.93" width="643.00" height="6.50" rx="0.8" fill="#fff" stroke="#5c5c5c" stroke-width="0.95"/>
<rect x="215.30" y="500.72" width="643.00" height="6.50" rx="0.8" fill="#fff" stroke="#5c5c5c" stroke-width="0.95"/>
<rect x="215.30" y="538.51" width="643.00" height="6.50" rx="0.8" fill="#fff" stroke="#5c5c5c" stroke-width="0.95"/>
<rect x="215.30" y="576.30" width="643.00" height="6.50" rx="0.8" fill="#fff" stroke="#5c5c5c" stroke-width="0.95"/>
<rect x="215.30" y="614.09" width="643.00" height="6.50" rx="0.8" fill="#fff" stroke="#5c5c5c" stroke-width="0.95"/>
<rect x="215.30" y="651.88" width="643.00" height="6.50" rx="0.8" fill="#fff" stroke="#5c5c5c" stroke-width="0.95"/>
<rect x="215.30" y="689.67" width="643.00" height="6.50" rx="0.8" fill="#fff" stroke="#5c5c5c" stroke-width="0.95"/>
<rect x="215.30" y="727.46" width="643.00" height="6.50" rx="0.8" fill="#fff" stroke="#5c5c5c" stroke-width="0.95"/>
<rect x="289.20" y="372.60" width="11.10" height="90.33" rx="0.6" fill="#fff" stroke="#5c5c5c" stroke-width="0.95"/>
<path d="M289.2 380.5 h11.1 M289.2 451.9 h11.1" stroke="#5c5c5c" stroke-width="0.8"/>
<rect x="489.20" y="372.60" width="10.90" height="186.10" rx="0.6" fill="#fff" stroke="#5c5c5c" stroke-width="0.95"/>
<rect x="578.60" y="552.30" width="10.90" height="181.86" rx="0.4" fill="#fff" stroke="#848484" stroke-width="0.85"/>
<rect x="582.5" y="552.3" width="3.1" height="181.86" fill="#050505"/>
<rect x="582.1" y="576.30" width="3.9" height="6.5" fill="#050505"/><path d="M589.4 576.30 v6.5 M578.7 576.30 v6.5" stroke="#333" stroke-width="0.9"/>
<rect x="582.1" y="614.09" width="3.9" height="6.5" fill="#050505"/><path d="M589.4 614.09 v6.5 M578.7 614.09 v6.5" stroke="#333" stroke-width="0.9"/>
<rect x="582.1" y="651.88" width="3.9" height="6.5" fill="#050505"/><path d="M589.4 651.88 v6.5 M578.7 651.88 v6.5" stroke="#333" stroke-width="0.9"/>
<rect x="582.1" y="689.67" width="3.9" height="6.5" fill="#050505"/><path d="M589.4 689.67 v6.5 M578.7 689.67 v6.5" stroke="#333" stroke-width="0.9"/>
<rect x="582.1" y="727.46" width="3.9" height="6.5" fill="#050505"/><path d="M589.4 727.46 v6.5 M578.7 727.46 v6.5" stroke="#333" stroke-width="0.9"/>
<path d="M200 786.2 h16" stroke="#f0a0a0" stroke-width="0.8" stroke-dasharray="1 1"/><path d="M221.2 791 v14" stroke="#a0e0a0" stroke-width="0.8" stroke-dasharray="1 1"/>
<rect x="213.6" y="778.6" width="15.2" height="15.2" fill="none" stroke="#c4c4d4" stroke-width="0.6" stroke-dasharray="1 1.2"/>
<path d="M221.2 757.6 v24.2" stroke="#18a018" stroke-width="1.5"/><path d="M226 786.2 h24.2" stroke="#d01818" stroke-width="1.4"/>
<rect x="216.6" y="781.6" width="9.3" height="9.2" fill="#0a0ad8"/><rect x="220.6" y="785.4" width="1.3" height="1.4" fill="#dfe4ff"/>
<circle cx="192.8" cy="829.0" r="4.3" fill="none" stroke="#2a3a98" stroke-width="1.5" stroke-dasharray="1.5 1.88"/><rect x="191.5" y="827.7" width="2.6" height="2.6" fill="#e03040" opacity="0.85"/>
<defs><clipPath id="c3d"><rect x="1057" y="93" width="542" height="373.5"/></clipPath></defs>
<g clip-path="url(#c3d)"><polygon points="1316.8,182.4 1600.0,287.9 1600.0,316.0 1505.3,465.5 1504.0,467.5 1057.0,467.5 1057.0,274.8" fill="#ffffff" /><polygon points="1073.3,320.3 1281.8,230.5 1284.3,230.3 1285.5,230.9 1078.0,321.1 1074.2,321.6" fill="#b5b8bc" /><polygon points="1078.5,327.9 1289.1,234.3 1291.6,234.1 1292.8,234.7 1083.3,328.7 1079.4,329.2" fill="#b5b8bc" /><polygon points="1083.9,335.9 1296.6,238.3 1299.1,238.0 1300.4,238.7 1088.9,336.7 1084.9,337.3" fill="#b5b8bc" /><polygon points="1089.7,344.2 1304.3,242.4 1306.9,242.1 1308.3,242.8 1094.7,345.1 1090.7,345.7" fill="#b5b8bc" /><polygon points="1095.7,353.1 1312.4,246.6 1315.0,246.3 1316.4,247.1 1100.9,354.0 1096.7,354.6" fill="#b5b8bc" /><polygon points="1102.0,362.4 1136.9,344.6 1140.9,344.1 1142.1,345.5 1107.4,363.4 1103.2,364.0" fill="#b5b8bc" /><polygon points="1108.7,372.2 1144.2,353.5 1148.2,352.9 1149.5,354.4 1114.3,373.3 1109.9,373.9" fill="#b5b8bc" /><polygon points="1115.8,382.6 1232.6,318.4 1236.1,318.0 1237.7,319.2 1121.5,383.7 1117.1,384.4" fill="#b5b8bc" /><polygon points="1123.3,393.6 1241.6,326.0 1245.2,325.4 1246.8,326.8 1129.2,394.8 1124.6,395.5" fill="#b5b8bc" /><polygon points="1131.3,405.2 1251.1,333.8 1254.8,333.3 1256.4,334.7 1137.4,406.5 1132.7,407.3" fill="#b5b8bc" /><polygon points="1139.7,417.6 1291.5,323.2 1295.0,322.7 1296.8,324.0 1146.1,419.0 1141.2,419.9" fill="#b5b8bc" /><polygon points="1148.7,430.9 1302.1,330.9 1305.6,330.4 1307.5,331.8 1155.3,432.3 1150.3,433.2" fill="#b5b8bc" /><polygon points="1158.3,444.9 1313.2,339.0 1316.8,338.5 1318.8,339.9 1165.2,446.5 1160.0,447.4" fill="#b5b8bc" /><polygon points="1168.6,460.0 1324.9,347.6 1328.6,347.0 1330.7,348.5 1175.7,461.6 1170.4,462.7" fill="#b5b8bc" /><polygon points="1179.6,476.1 1337.3,356.6 1341.1,356.0 1343.3,357.6 1187.0,477.9 1181.5,479.0" fill="#b5b8bc" /><polygon points="1219.6,302.5 1320.8,251.0 1323.4,250.7 1324.9,251.5 1224.3,303.2 1221.0,303.7" fill="#b5b8bc" /><polygon points="1227.8,309.3 1329.5,255.6 1332.1,255.3 1333.7,256.1 1232.7,310.0 1229.3,310.5" fill="#b5b8bc" /><polygon points="1236.4,316.4 1338.5,260.3 1341.2,260.0 1342.8,260.8 1241.5,317.1 1238.0,317.6" fill="#b5b8bc" /><polygon points="1245.5,323.8 1347.8,265.2 1350.6,264.9 1352.2,265.8 1250.7,324.6 1247.1,325.1" fill="#b5b8bc" /><polygon points="1255.0,331.5 1357.6,270.4 1360.4,270.0 1362.1,270.9 1260.3,332.4 1256.7,332.9" fill="#b5b8bc" /><polygon points="1295.0,321.0 1367.7,275.7 1370.6,275.4 1372.3,276.3 1300.2,321.8 1296.7,322.3" fill="#b5b8bc" /><polygon points="1305.6,328.6 1378.3,281.3 1381.2,280.9 1383.0,281.9 1311.0,329.5 1307.4,330.0" fill="#b5b8bc" /><polygon points="1316.7,336.6 1389.3,287.1 1392.2,286.7 1394.2,287.7 1322.3,337.5 1318.7,338.1" fill="#b5b8bc" /><polygon points="1328.4,345.1 1400.8,293.1 1403.8,292.7 1405.8,293.8 1334.2,346.0 1330.5,346.6" fill="#b5b8bc" /><polygon points="1340.8,354.0 1412.8,299.4 1415.8,299.0 1417.9,300.1 1346.7,354.9 1343.0,355.5" fill="#b5b8bc" /><polygon points="1134.2,341.3 1139.1,338.8 1143.0,338.3 1161.0,359.4 1156.0,362.2 1151.8,362.8" fill="#b5b8bc" /><polygon points="1212.7,301.9 1216.4,300.0 1219.8,299.6 1263.9,335.3 1260.0,337.7 1256.3,338.2" fill="#b5b8bc" /><polygon points="1285.0,318.4 1288.5,316.4 1291.9,315.9 1347.0,355.1 1343.6,357.8 1339.8,358.4" fill="#b5b8bc" /><polygon points="1154.5,360.4 1159.6,357.6 1208.8,350.3 1210.4,351.8 1205.8,354.5 1155.9,362.0" fill="#b5b8bc" /><polygon points="1232.6,318.4 1236.4,316.4 1239.9,315.9 1241.5,317.1 1237.7,319.2 1234.1,319.7" fill="#b5b8bc" /><polygon points="1241.6,326.0 1245.5,323.8 1249.0,323.2 1250.7,324.6 1246.8,326.8 1243.2,327.3" fill="#b5b8bc" /><polygon points="1251.1,333.8 1255.0,331.5 1258.6,331.0 1260.3,332.4 1256.4,334.7 1252.8,335.2" fill="#b5b8bc" /><polygon points="1291.5,323.2 1295.0,321.0 1298.4,320.5 1300.2,321.8 1296.8,324.0 1293.3,324.5" fill="#b5b8bc" /><polygon points="1302.1,330.9 1305.6,328.6 1309.1,328.1 1311.0,329.5 1307.5,331.8 1304.0,332.3" fill="#b5b8bc" /><polygon points="1313.2,339.0 1316.7,336.6 1320.3,336.1 1322.3,337.5 1318.8,339.9 1315.2,340.5" fill="#b5b8bc" /><polygon points="1324.9,347.6 1328.4,345.1 1332.1,344.5 1334.2,346.0 1330.7,348.5 1327.0,349.1" fill="#b5b8bc" /><polygon points="1337.3,356.6 1340.8,354.0 1344.5,353.4 1346.7,354.9 1343.3,357.6 1339.5,358.2" fill="#b5b8bc" /><polygon points="1191.6,337.4 1196.6,335.6 1199.4,340.6 1195.0,343.2" fill="#e4cf8a" /><path d="M1191.6 337.4 l3.4 5.8 l4.4-2.6" fill="none" stroke="#8a7634" stroke-width="0.7"/><polygon points="1191.4,304.5 1193.0,306.0 1205.8,354.5 1204.3,352.9" fill="#857232" /><polygon points="1193.0,306.0 1198.2,303.5 1210.4,351.8 1205.8,354.5" fill="#b69c4c" /><polygon points="1191.4,304.5 1196.5,302.0 1198.2,303.5 1193.0,306.0" fill="#cdb468" /><polygon points="1257.3,248.3 1258.9,249.3 1259.4,253.3 1257.8,252.3" fill="#6e5c22" /><polygon points="1258.9,249.3 1359.1,204.5 1358.9,208.0 1259.4,253.3" fill="#d1b163" /><polygon points="1257.3,248.3 1357.4,203.8 1359.1,204.5 1258.9,249.3" fill="#fcf9df" /><polygon points="1267.0,254.2 1268.8,255.2 1269.2,259.3 1267.5,258.2" fill="#6e5c22" /><polygon points="1268.8,255.2 1369.1,208.4 1368.8,212.0 1269.2,259.3" fill="#d1b163" /><polygon points="1267.0,254.2 1367.3,207.7 1369.1,208.4 1268.8,255.2" fill="#fcf9df" /><polygon points="1277.3,260.4 1279.1,261.5 1279.5,265.6 1277.7,264.5" fill="#6e5c22" /><polygon points="1279.1,261.5 1379.5,212.5 1379.2,216.1 1279.5,265.6" fill="#d1b163" /><polygon points="1277.3,260.4 1377.7,211.8 1379.5,212.5 1279.1,261.5" fill="#fcf9df" /><polygon points="1288.1,266.9 1290.0,268.1 1290.3,272.2 1288.4,271.1" fill="#6e5c22" /><polygon points="1290.0,268.1 1390.3,216.8 1390.0,220.4 1290.3,272.2" fill="#d1b163" /><polygon points="1288.1,266.9 1388.4,216.0 1390.3,216.8 1290.0,268.1" fill="#fcf9df" /><polygon points="1299.5,273.8 1301.5,275.0 1301.7,279.2 1299.7,278.0" fill="#6e5c22" /><polygon points="1301.5,275.0 1401.6,221.2 1401.2,224.9 1301.7,279.2" fill="#d1b163" /><polygon points="1299.5,273.8 1399.7,220.4 1401.6,221.2 1301.5,275.0" fill="#fcf9df" /><polygon points="1341.0,264.5 1343.1,265.6 1343.0,269.8 1340.9,268.6" fill="#6e5c22" /><polygon points="1343.1,265.6 1413.4,225.8 1412.9,229.6 1343.0,269.8" fill="#d1b163" /><polygon points="1341.0,264.5 1411.4,225.0 1413.4,225.8 1343.1,265.6" fill="#fcf9df" /><polygon points="1353.7,271.2 1355.9,272.4 1355.7,276.6 1353.5,275.4" fill="#6e5c22" /><polygon points="1355.9,272.4 1425.8,230.7 1425.1,234.5 1355.7,276.6" fill="#d1b163" /><polygon points="1353.7,271.2 1423.6,229.8 1425.8,230.7 1355.9,272.4" fill="#fcf9df" /><polygon points="1367.0,278.4 1369.4,279.6 1369.1,283.9 1366.7,282.6" fill="#6e5c22" /><polygon points="1369.4,279.6 1438.6,235.7 1437.9,239.6 1369.1,283.9" fill="#d1b163" /><polygon points="1367.0,278.4 1436.4,234.8 1438.6,235.7 1369.4,279.6" fill="#fcf9df" /><polygon points="1381.1,285.9 1383.6,287.2 1383.2,291.5 1380.7,290.2" fill="#6e5c22" /><polygon points="1383.6,287.2 1452.1,241.0 1451.3,244.9 1383.2,291.5" fill="#d1b163" /><polygon points="1381.1,285.9 1449.8,240.1 1452.1,241.0 1383.6,287.2" fill="#fcf9df" /><polygon points="1396.1,293.8 1398.7,295.2 1398.1,299.6 1395.5,298.1" fill="#6e5c22" /><polygon points="1398.7,295.2 1466.3,246.5 1465.3,250.5 1398.1,299.6" fill="#d1b163" /><polygon points="1396.1,293.8 1463.8,245.6 1466.3,246.5 1398.7,295.2" fill="#fcf9df" /><polygon points="1249.8,247.7 1302.0,279.7 1302.2,284.0 1250.4,251.7" fill="#6e5c22" /><polygon points="1302.0,279.7 1305.9,277.6 1306.0,281.9 1302.2,284.0" fill="#d1b163" /><polygon points="1249.8,247.7 1253.6,246.1 1305.9,277.6 1302.0,279.7" fill="#fcf9df" /><polygon points="1170.2,282.5 1192.0,301.7 1193.2,306.1 1171.5,286.7" fill="#6e5c22" /><polygon points="1192.0,301.7 1197.2,299.2 1198.3,303.6 1193.2,306.1" fill="#d1b163" /><polygon points="1170.2,282.5 1175.3,280.3 1197.2,299.2 1192.0,301.7" fill="#fcf9df" /><polygon points="1102.3,263.9 1103.3,265.0 1105.0,269.1 1104.0,268.0" fill="#6e5c22" /><polygon points="1103.3,265.0 1314.5,187.0 1314.5,190.3 1105.0,269.1" fill="#d1b163" /><polygon points="1102.3,263.9 1313.1,186.5 1314.5,187.0 1103.3,265.0" fill="#fcf9df" /><polygon points="1108.6,270.6 1109.8,271.8 1111.4,275.9 1110.3,274.7" fill="#6e5c22" /><polygon points="1109.8,271.8 1322.7,190.3 1322.8,193.6 1111.4,275.9" fill="#d1b163" /><polygon points="1108.6,270.6 1321.3,189.7 1322.7,190.3 1109.8,271.8" fill="#fcf9df" /><polygon points="1115.3,277.6 1116.5,278.9 1118.2,283.1 1117.0,281.9" fill="#6e5c22" /><polygon points="1116.5,278.9 1331.3,193.6 1331.3,197.0 1118.2,283.1" fill="#d1b163" /><polygon points="1115.3,277.6 1329.8,193.0 1331.3,193.6 1116.5,278.9" fill="#fcf9df" /><polygon points="1122.4,285.1 1123.6,286.4 1125.3,290.7 1124.0,289.4" fill="#6e5c22" /><polygon points="1123.6,286.4 1340.2,197.1 1340.2,200.5 1125.3,290.7" fill="#d1b163" /><polygon points="1122.4,285.1 1338.7,196.5 1340.2,197.1 1123.6,286.4" fill="#fcf9df" /><polygon points="1129.9,293.0 1131.2,294.4 1132.8,298.8 1131.5,297.3" fill="#6e5c22" /><polygon points="1131.2,294.4 1349.5,200.7 1349.4,204.2 1132.8,298.8" fill="#d1b163" /><polygon points="1129.9,293.0 1347.9,200.1 1349.5,200.7 1131.2,294.4" fill="#fcf9df" /><polygon points="1137.8,301.4 1139.2,302.8 1140.8,307.2 1139.4,305.8" fill="#6e5c22" /><polygon points="1139.2,302.8 1175.1,286.8 1176.3,291.1 1140.8,307.2" fill="#d1b163" /><polygon points="1137.8,301.4 1173.6,285.5 1175.1,286.8 1139.2,302.8" fill="#fcf9df" /><polygon points="1146.2,310.2 1147.6,311.8 1149.2,316.3 1147.7,314.7" fill="#6e5c22" /><polygon points="1147.6,311.8 1184.1,294.8 1185.3,299.1 1149.2,316.3" fill="#d1b163" /><polygon points="1146.2,310.2 1182.5,293.4 1184.1,294.8 1147.6,311.8" fill="#fcf9df" /><polygon points="1155.1,319.6 1156.7,321.3 1158.2,325.8 1156.6,324.1" fill="#6e5c22" /><polygon points="1156.7,321.3 1275.3,263.4 1275.7,267.5 1158.2,325.8" fill="#d1b163" /><polygon points="1155.1,319.6 1273.5,262.3 1275.3,263.4 1156.7,321.3" fill="#fcf9df" /><polygon points="1164.6,329.7 1166.3,331.5 1167.8,336.0 1166.1,334.2" fill="#6e5c22" /><polygon points="1166.3,331.5 1286.2,270.1 1286.5,274.2 1167.8,336.0" fill="#d1b163" /><polygon points="1164.6,329.7 1284.3,268.9 1286.2,270.1 1166.3,331.5" fill="#fcf9df" /><polygon points="1174.7,340.4 1176.5,342.3 1178.0,346.9 1176.2,345.0" fill="#6e5c22" /><polygon points="1176.5,342.3 1297.7,277.1 1297.9,281.3 1178.0,346.9" fill="#d1b163" /><polygon points="1174.7,340.4 1295.7,275.9 1297.7,277.1 1176.5,342.3" fill="#fcf9df" /><polygon points="1185.5,351.8 1187.4,353.8 1188.9,358.5 1186.9,356.4" fill="#6e5c22" /><polygon points="1187.4,353.8 1339.7,267.6 1339.7,271.7 1188.9,358.5" fill="#d1b163" /><polygon points="1185.5,351.8 1337.6,266.4 1339.7,267.6 1187.4,353.8" fill="#fcf9df" /><polygon points="1197.1,364.0 1199.2,366.2 1200.5,370.9 1198.5,368.7" fill="#6e5c22" /><polygon points="1199.2,366.2 1352.5,274.5 1352.3,278.7 1200.5,370.9" fill="#d1b163" /><polygon points="1197.1,364.0 1350.3,273.3 1352.5,274.5 1199.2,366.2" fill="#fcf9df" /><polygon points="1209.6,377.2 1211.8,379.6 1213.1,384.3 1210.8,381.9" fill="#6e5c22" /><polygon points="1211.8,379.6 1366.0,281.8 1365.7,286.0 1213.1,384.3" fill="#d1b163" /><polygon points="1209.6,377.2 1363.7,280.5 1366.0,281.8 1211.8,379.6" fill="#fcf9df" /><polygon points="1223.0,391.4 1225.4,393.9 1226.5,398.7 1224.2,396.1" fill="#6e5c22" /><polygon points="1225.4,393.9 1380.3,289.5 1379.9,293.8 1226.5,398.7" fill="#d1b163" /><polygon points="1223.0,391.4 1377.8,288.1 1380.3,289.5 1225.4,393.9" fill="#fcf9df" /><polygon points="1237.5,406.7 1240.1,409.5 1241.1,414.2 1238.5,411.4" fill="#6e5c22" /><polygon points="1240.1,409.5 1395.4,297.6 1394.8,302.0 1241.1,414.2" fill="#d1b163" /><polygon points="1237.5,406.7 1392.7,296.2 1395.4,297.6 1240.1,409.5" fill="#fcf9df" /><ellipse cx="1120.1" cy="261.7" rx="1.26" ry="0.67" fill="#c98f3e" opacity="0.75" transform="rotate(-30 1120.1 261.7)"/><ellipse cx="1133.7" cy="256.0" rx="1.12" ry="0.60" fill="#c98f3e" opacity="0.75" transform="rotate(-30 1133.7 256.0)"/><ellipse cx="1159.1" cy="246.9" rx="0.94" ry="0.50" fill="#c98f3e" opacity="0.75" transform="rotate(-30 1159.1 246.9)"/><ellipse cx="1177.2" cy="239.0" rx="0.88" ry="0.47" fill="#c98f3e" opacity="0.75" transform="rotate(-30 1177.2 239.0)"/><ellipse cx="1193.0" cy="233.6" rx="1.34" ry="0.72" fill="#c98f3e" opacity="0.75" transform="rotate(-30 1193.0 233.6)"/><ellipse cx="1221.6" cy="222.5" rx="1.10" ry="0.59" fill="#c98f3e" opacity="0.75" transform="rotate(-30 1221.6 222.5)"/><ellipse cx="1239.7" cy="216.2" rx="0.94" ry="0.50" fill="#c98f3e" opacity="0.75" transform="rotate(-30 1239.7 216.2)"/><ellipse cx="1259.4" cy="208.7" rx="1.48" ry="0.79" fill="#c98f3e" opacity="0.75" transform="rotate(-30 1259.4 208.7)"/><ellipse cx="1271.8" cy="204.7" rx="1.28" ry="0.68" fill="#c98f3e" opacity="0.75" transform="rotate(-30 1271.8 204.7)"/><ellipse cx="1289.9" cy="198.5" rx="0.76" ry="0.41" fill="#c98f3e" opacity="0.75" transform="rotate(-30 1289.9 198.5)"/><ellipse cx="1307.4" cy="192.3" rx="1.20" ry="0.64" fill="#c98f3e" opacity="0.75" transform="rotate(-30 1307.4 192.3)"/><ellipse cx="1124.7" cy="268.3" rx="1.05" ry="0.56" fill="#c98f3e" opacity="0.75" transform="rotate(-30 1124.7 268.3)"/><ellipse cx="1140.7" cy="261.8" rx="1.29" ry="0.69" fill="#c98f3e" opacity="0.75" transform="rotate(-30 1140.7 261.8)"/><ellipse cx="1158.9" cy="253.9" rx="1.38" ry="0.73" fill="#c98f3e" opacity="0.75" transform="rotate(-30 1158.9 253.9)"/><ellipse cx="1178.4" cy="247.1" rx="0.84" ry="0.45" fill="#c98f3e" opacity="0.75" transform="rotate(-30 1178.4 247.1)"/><ellipse cx="1201.5" cy="238.6" rx="1.27" ry="0.68" fill="#c98f3e" opacity="0.75" transform="rotate(-30 1201.5 238.6)"/><ellipse cx="1228.8" cy="228.5" rx="1.37" ry="0.73" fill="#c98f3e" opacity="0.75" transform="rotate(-30 1228.8 228.5)"/><ellipse cx="1248.5" cy="221.8" rx="1.03" ry="0.55" fill="#c98f3e" opacity="0.75" transform="rotate(-30 1248.5 221.8)"/><ellipse cx="1257.8" cy="216.9" rx="1.03" ry="0.55" fill="#c98f3e" opacity="0.75" transform="rotate(-30 1257.8 216.9)"/><ellipse cx="1267.6" cy="212.5" rx="0.80" ry="0.43" fill="#c98f3e" opacity="0.75" transform="rotate(-30 1267.6 212.5)"/><ellipse cx="1276.1" cy="210.6" rx="1.42" ry="0.76" fill="#c98f3e" opacity="0.75" transform="rotate(-30 1276.1 210.6)"/><ellipse cx="1291.5" cy="204.0" rx="1.03" ry="0.55" fill="#c98f3e" opacity="0.75" transform="rotate(-30 1291.5 204.0)"/><ellipse cx="1299.4" cy="201.0" rx="0.98" ry="0.52" fill="#c98f3e" opacity="0.75" transform="rotate(-30 1299.4 201.0)"/><ellipse cx="1311.1" cy="197.2" rx="1.46" ry="0.78" fill="#c98f3e" opacity="0.75" transform="rotate(-30 1311.1 197.2)"/><ellipse cx="1129.4" cy="276.0" rx="0.77" ry="0.41" fill="#c98f3e" opacity="0.75" transform="rotate(-30 1129.4 276.0)"/><ellipse cx="1166.3" cy="262.4" rx="1.01" ry="0.54" fill="#c98f3e" opacity="0.75" transform="rotate(-30 1166.3 262.4)"/><ellipse cx="1193.9" cy="249.7" rx="1.37" ry="0.73" fill="#c98f3e" opacity="0.75" transform="rotate(-30 1193.9 249.7)"/><ellipse cx="1207.4" cy="244.4" rx="0.79" ry="0.42" fill="#c98f3e" opacity="0.75" transform="rotate(-30 1207.4 244.4)"/><ellipse cx="1237.0" cy="234.3" rx="0.87" ry="0.46" fill="#c98f3e" opacity="0.75" transform="rotate(-30 1237.0 234.3)"/><ellipse cx="1263.4" cy="222.1" rx="0.78" ry="0.42" fill="#c98f3e" opacity="0.75" transform="rotate(-30 1263.4 222.1)"/><ellipse cx="1275.0" cy="217.5" rx="0.87" ry="0.46" fill="#c98f3e" opacity="0.75" transform="rotate(-30 1275.0 217.5)"/><ellipse cx="1296.8" cy="209.3" rx="1.40" ry="0.74" fill="#c98f3e" opacity="0.75" transform="rotate(-30 1296.8 209.3)"/><ellipse cx="1310.9" cy="204.2" rx="1.34" ry="0.71" fill="#c98f3e" opacity="0.75" transform="rotate(-30 1310.9 204.2)"/><ellipse cx="1317.0" cy="200.4" rx="0.97" ry="0.52" fill="#c98f3e" opacity="0.75" transform="rotate(-30 1317.0 200.4)"/><ellipse cx="1324.8" cy="198.5" rx="1.09" ry="0.58" fill="#c98f3e" opacity="0.75" transform="rotate(-30 1324.8 198.5)"/><ellipse cx="1142.4" cy="280.5" rx="0.96" ry="0.51" fill="#c98f3e" opacity="0.75" transform="rotate(-30 1142.4 280.5)"/><ellipse cx="1159.6" cy="273.5" rx="1.20" ry="0.64" fill="#c98f3e" opacity="0.75" transform="rotate(-30 1159.6 273.5)"/><ellipse cx="1192.7" cy="261.0" rx="0.85" ry="0.45" fill="#c98f3e" opacity="0.75" transform="rotate(-30 1192.7 261.0)"/><ellipse cx="1214.7" cy="249.7" rx="1.07" ry="0.57" fill="#c98f3e" opacity="0.75" transform="rotate(-30 1214.7 249.7)"/><ellipse cx="1232.3" cy="244.9" rx="0.96" ry="0.51" fill="#c98f3e" opacity="0.75" transform="rotate(-30 1232.3 244.9)"/><ellipse cx="1255.1" cy="234.9" rx="1.01" ry="0.54" fill="#c98f3e" opacity="0.75" transform="rotate(-30 1255.1 234.9)"/><ellipse cx="1270.7" cy="228.0" rx="1.34" ry="0.72" fill="#c98f3e" opacity="0.75" transform="rotate(-30 1270.7 228.0)"/><ellipse cx="1293.7" cy="217.8" rx="1.11" ry="0.59" fill="#c98f3e" opacity="0.75" transform="rotate(-30 1293.7 217.8)"/><ellipse cx="1309.6" cy="211.3" rx="1.31" ry="0.70" fill="#c98f3e" opacity="0.75" transform="rotate(-30 1309.6 211.3)"/><ellipse cx="1329.3" cy="203.6" rx="1.01" ry="0.54" fill="#c98f3e" opacity="0.75" transform="rotate(-30 1329.3 203.6)"/><ellipse cx="1335.9" cy="200.7" rx="1.09" ry="0.58" fill="#c98f3e" opacity="0.75" transform="rotate(-30 1335.9 200.7)"/><ellipse cx="1148.4" cy="288.2" rx="1.34" ry="0.72" fill="#c98f3e" opacity="0.75" transform="rotate(-30 1148.4 288.2)"/><ellipse cx="1185.4" cy="272.2" rx="1.45" ry="0.77" fill="#c98f3e" opacity="0.75" transform="rotate(-30 1185.4 272.2)"/><ellipse cx="1212.0" cy="262.0" rx="1.22" ry="0.65" fill="#c98f3e" opacity="0.75" transform="rotate(-30 1212.0 262.0)"/><ellipse cx="1242.8" cy="249.8" rx="0.77" ry="0.41" fill="#c98f3e" opacity="0.75" transform="rotate(-30 1242.8 249.8)"/><ellipse cx="1257.6" cy="241.9" rx="1.24" ry="0.66" fill="#c98f3e" opacity="0.75" transform="rotate(-30 1257.6 241.9)"/><ellipse cx="1268.0" cy="237.5" rx="1.19" ry="0.63" fill="#c98f3e" opacity="0.75" transform="rotate(-30 1268.0 237.5)"/><ellipse cx="1288.6" cy="227.8" rx="1.37" ry="0.73" fill="#c98f3e" opacity="0.75" transform="rotate(-30 1288.6 227.8)"/><ellipse cx="1300.7" cy="224.5" rx="1.31" ry="0.70" fill="#c98f3e" opacity="0.75" transform="rotate(-30 1300.7 224.5)"/><ellipse cx="1322.2" cy="214.0" rx="1.43" ry="0.76" fill="#c98f3e" opacity="0.75" transform="rotate(-30 1322.2 214.0)"/><ellipse cx="1328.7" cy="210.9" rx="1.22" ry="0.65" fill="#c98f3e" opacity="0.75" transform="rotate(-30 1328.7 210.9)"/><ellipse cx="1346.7" cy="204.0" rx="1.35" ry="0.72" fill="#c98f3e" opacity="0.75" transform="rotate(-30 1346.7 204.0)"/><ellipse cx="1143.9" cy="302.0" rx="1.26" ry="0.67" fill="#c98f3e" opacity="0.75" transform="rotate(-30 1143.9 302.0)"/><ellipse cx="1155.3" cy="312.3" rx="0.77" ry="0.41" fill="#c98f3e" opacity="0.75" transform="rotate(-30 1155.3 312.3)"/><ellipse cx="1175.2" cy="301.0" rx="0.81" ry="0.43" fill="#c98f3e" opacity="0.75" transform="rotate(-30 1175.2 301.0)"/><ellipse cx="1180.3" cy="313.1" rx="0.79" ry="0.42" fill="#c98f3e" opacity="0.75" transform="rotate(-30 1180.3 313.1)"/><ellipse cx="1195.5" cy="304.0" rx="1.44" ry="0.77" fill="#c98f3e" opacity="0.75" transform="rotate(-30 1195.5 304.0)"/><ellipse cx="1228.6" cy="288.6" rx="0.96" ry="0.51" fill="#c98f3e" opacity="0.75" transform="rotate(-30 1228.6 288.6)"/><ellipse cx="1256.8" cy="275.6" rx="1.39" ry="0.74" fill="#c98f3e" opacity="0.75" transform="rotate(-30 1256.8 275.6)"/><ellipse cx="1178.9" cy="326.8" rx="1.05" ry="0.56" fill="#c98f3e" opacity="0.75" transform="rotate(-30 1178.9 326.8)"/><ellipse cx="1213.8" cy="309.0" rx="1.07" ry="0.57" fill="#c98f3e" opacity="0.75" transform="rotate(-30 1213.8 309.0)"/><ellipse cx="1227.5" cy="301.3" rx="1.39" ry="0.74" fill="#c98f3e" opacity="0.75" transform="rotate(-30 1227.5 301.3)"/><ellipse cx="1245.5" cy="294.1" rx="1.35" ry="0.72" fill="#c98f3e" opacity="0.75" transform="rotate(-30 1245.5 294.1)"/><ellipse cx="1264.9" cy="282.8" rx="0.85" ry="0.46" fill="#c98f3e" opacity="0.75" transform="rotate(-30 1264.9 282.8)"/><ellipse cx="1184.7" cy="341.8" rx="1.30" ry="0.69" fill="#c98f3e" opacity="0.75" transform="rotate(-30 1184.7 341.8)"/><ellipse cx="1206.6" cy="327.5" rx="1.11" ry="0.59" fill="#c98f3e" opacity="0.75" transform="rotate(-30 1206.6 327.5)"/><ellipse cx="1227.5" cy="318.5" rx="1.30" ry="0.69" fill="#c98f3e" opacity="0.75" transform="rotate(-30 1227.5 318.5)"/><ellipse cx="1248.4" cy="306.5" rx="1.25" ry="0.66" fill="#c98f3e" opacity="0.75" transform="rotate(-30 1248.4 306.5)"/><ellipse cx="1259.1" cy="299.1" rx="1.43" ry="0.76" fill="#c98f3e" opacity="0.75" transform="rotate(-30 1259.1 299.1)"/><ellipse cx="1283.8" cy="287.9" rx="1.34" ry="0.72" fill="#c98f3e" opacity="0.75" transform="rotate(-30 1283.8 287.9)"/><ellipse cx="1198.4" cy="349.2" rx="1.42" ry="0.76" fill="#c98f3e" opacity="0.75" transform="rotate(-30 1198.4 349.2)"/><ellipse cx="1233.6" cy="329.9" rx="1.05" ry="0.56" fill="#c98f3e" opacity="0.75" transform="rotate(-30 1233.6 329.9)"/><ellipse cx="1262.6" cy="312.3" rx="0.97" ry="0.52" fill="#c98f3e" opacity="0.75" transform="rotate(-30 1262.6 312.3)"/><ellipse cx="1286.8" cy="298.8" rx="1.32" ry="0.70" fill="#c98f3e" opacity="0.75" transform="rotate(-30 1286.8 298.8)"/><ellipse cx="1308.1" cy="288.6" rx="1.30" ry="0.69" fill="#c98f3e" opacity="0.75" transform="rotate(-30 1308.1 288.6)"/><ellipse cx="1327.2" cy="275.5" rx="1.03" ry="0.55" fill="#c98f3e" opacity="0.75" transform="rotate(-30 1327.2 275.5)"/><ellipse cx="1209.4" cy="361.5" rx="0.76" ry="0.41" fill="#c98f3e" opacity="0.75" transform="rotate(-30 1209.4 361.5)"/><ellipse cx="1251.9" cy="337.4" rx="0.80" ry="0.42" fill="#c98f3e" opacity="0.75" transform="rotate(-30 1251.9 337.4)"/><ellipse cx="1274.8" cy="324.6" rx="0.98" ry="0.52" fill="#c98f3e" opacity="0.75" transform="rotate(-30 1274.8 324.6)"/><ellipse cx="1287.7" cy="316.9" rx="0.85" ry="0.45" fill="#c98f3e" opacity="0.75" transform="rotate(-30 1287.7 316.9)"/><ellipse cx="1313.7" cy="301.2" rx="0.96" ry="0.51" fill="#c98f3e" opacity="0.75" transform="rotate(-30 1313.7 301.2)"/><ellipse cx="1331.0" cy="288.7" rx="0.75" ry="0.40" fill="#c98f3e" opacity="0.75" transform="rotate(-30 1331.0 288.7)"/><ellipse cx="1346.5" cy="280.6" rx="1.23" ry="0.66" fill="#c98f3e" opacity="0.75" transform="rotate(-30 1346.5 280.6)"/><ellipse cx="1232.5" cy="368.9" rx="1.14" ry="0.61" fill="#c98f3e" opacity="0.75" transform="rotate(-30 1232.5 368.9)"/><ellipse cx="1262.8" cy="351.4" rx="0.97" ry="0.52" fill="#c98f3e" opacity="0.75" transform="rotate(-30 1262.8 351.4)"/><ellipse cx="1288.0" cy="333.6" rx="1.37" ry="0.73" fill="#c98f3e" opacity="0.75" transform="rotate(-30 1288.0 333.6)"/><ellipse cx="1304.9" cy="321.5" rx="0.88" ry="0.47" fill="#c98f3e" opacity="0.75" transform="rotate(-30 1304.9 321.5)"/><ellipse cx="1321.4" cy="311.6" rx="0.96" ry="0.51" fill="#c98f3e" opacity="0.75" transform="rotate(-30 1321.4 311.6)"/><ellipse cx="1343.4" cy="297.8" rx="1.00" ry="0.53" fill="#c98f3e" opacity="0.75" transform="rotate(-30 1343.4 297.8)"/><ellipse cx="1354.4" cy="290.2" rx="1.34" ry="0.71" fill="#c98f3e" opacity="0.75" transform="rotate(-30 1354.4 290.2)"/><ellipse cx="1248.0" cy="381.6" rx="0.80" ry="0.43" fill="#c98f3e" opacity="0.75" transform="rotate(-30 1248.0 381.6)"/><ellipse cx="1284.7" cy="357.5" rx="1.31" ry="0.70" fill="#c98f3e" opacity="0.75" transform="rotate(-30 1284.7 357.5)"/><ellipse cx="1296.5" cy="349.1" rx="1.03" ry="0.55" fill="#c98f3e" opacity="0.75" transform="rotate(-30 1296.5 349.1)"/><ellipse cx="1327.7" cy="328.5" rx="1.34" ry="0.71" fill="#c98f3e" opacity="0.75" transform="rotate(-30 1327.7 328.5)"/><ellipse cx="1357.4" cy="306.8" rx="1.05" ry="0.56" fill="#c98f3e" opacity="0.75" transform="rotate(-30 1357.4 306.8)"/><ellipse cx="1263.0" cy="394.0" rx="0.98" ry="0.52" fill="#c98f3e" opacity="0.75" transform="rotate(-30 1263.0 394.0)"/><ellipse cx="1287.4" cy="378.8" rx="0.81" ry="0.43" fill="#c98f3e" opacity="0.75" transform="rotate(-30 1287.4 378.8)"/><ellipse cx="1316.0" cy="356.9" rx="1.19" ry="0.63" fill="#c98f3e" opacity="0.75" transform="rotate(-30 1316.0 356.9)"/><ellipse cx="1347.4" cy="334.5" rx="0.91" ry="0.49" fill="#c98f3e" opacity="0.75" transform="rotate(-30 1347.4 334.5)"/><ellipse cx="1362.5" cy="323.4" rx="0.98" ry="0.52" fill="#c98f3e" opacity="0.75" transform="rotate(-30 1362.5 323.4)"/><ellipse cx="1376.1" cy="313.1" rx="0.94" ry="0.50" fill="#c98f3e" opacity="0.75" transform="rotate(-30 1376.1 313.1)"/><ellipse cx="1390.9" cy="303.5" rx="1.18" ry="0.63" fill="#c98f3e" opacity="0.75" transform="rotate(-30 1390.9 303.5)"/><ellipse cx="1265.3" cy="249.3" rx="1.19" ry="0.64" fill="#c98f3e" opacity="0.75" transform="rotate(-30 1265.3 249.3)"/><ellipse cx="1274.0" cy="243.7" rx="1.38" ry="0.73" fill="#c98f3e" opacity="0.75" transform="rotate(-30 1274.0 243.7)"/><ellipse cx="1287.6" cy="239.7" rx="1.34" ry="0.71" fill="#c98f3e" opacity="0.75" transform="rotate(-30 1287.6 239.7)"/><ellipse cx="1297.6" cy="233.3" rx="0.77" ry="0.41" fill="#c98f3e" opacity="0.75" transform="rotate(-30 1297.6 233.3)"/><ellipse cx="1305.1" cy="230.6" rx="1.30" ry="0.69" fill="#c98f3e" opacity="0.75" transform="rotate(-30 1305.1 230.6)"/><ellipse cx="1324.0" cy="221.6" rx="0.80" ry="0.43" fill="#c98f3e" opacity="0.75" transform="rotate(-30 1324.0 221.6)"/><ellipse cx="1337.8" cy="214.9" rx="1.26" ry="0.67" fill="#c98f3e" opacity="0.75" transform="rotate(-30 1337.8 214.9)"/><ellipse cx="1352.9" cy="209.1" rx="1.08" ry="0.58" fill="#c98f3e" opacity="0.75" transform="rotate(-30 1352.9 209.1)"/><ellipse cx="1278.8" cy="251.4" rx="1.36" ry="0.72" fill="#c98f3e" opacity="0.75" transform="rotate(-30 1278.8 251.4)"/><ellipse cx="1294.0" cy="244.3" rx="1.22" ry="0.65" fill="#c98f3e" opacity="0.75" transform="rotate(-30 1294.0 244.3)"/><ellipse cx="1312.6" cy="236.7" rx="1.19" ry="0.64" fill="#c98f3e" opacity="0.75" transform="rotate(-30 1312.6 236.7)"/><ellipse cx="1321.2" cy="233.7" rx="1.14" ry="0.61" fill="#c98f3e" opacity="0.75" transform="rotate(-30 1321.2 233.7)"/><ellipse cx="1331.3" cy="227.2" rx="0.99" ry="0.53" fill="#c98f3e" opacity="0.75" transform="rotate(-30 1331.3 227.2)"/><ellipse cx="1340.2" cy="223.2" rx="0.88" ry="0.47" fill="#c98f3e" opacity="0.75" transform="rotate(-30 1340.2 223.2)"/><ellipse cx="1355.6" cy="217.1" rx="0.77" ry="0.41" fill="#c98f3e" opacity="0.75" transform="rotate(-30 1355.6 217.1)"/><ellipse cx="1361.5" cy="214.4" rx="1.32" ry="0.70" fill="#c98f3e" opacity="0.75" transform="rotate(-30 1361.5 214.4)"/><ellipse cx="1287.8" cy="260.1" rx="0.95" ry="0.51" fill="#c98f3e" opacity="0.75" transform="rotate(-30 1287.8 260.1)"/><ellipse cx="1308.9" cy="249.4" rx="0.79" ry="0.42" fill="#c98f3e" opacity="0.75" transform="rotate(-30 1308.9 249.4)"/><ellipse cx="1320.8" cy="243.8" rx="1.18" ry="0.63" fill="#c98f3e" opacity="0.75" transform="rotate(-30 1320.8 243.8)"/><ellipse cx="1342.3" cy="232.6" rx="1.16" ry="0.62" fill="#c98f3e" opacity="0.75" transform="rotate(-30 1342.3 232.6)"/><ellipse cx="1360.4" cy="222.8" rx="1.45" ry="0.78" fill="#c98f3e" opacity="0.75" transform="rotate(-30 1360.4 222.8)"/><ellipse cx="1374.5" cy="215.6" rx="1.31" ry="0.70" fill="#c98f3e" opacity="0.75" transform="rotate(-30 1374.5 215.6)"/><ellipse cx="1301.0" cy="264.8" rx="1.42" ry="0.76" fill="#c98f3e" opacity="0.75" transform="rotate(-30 1301.0 264.8)"/><ellipse cx="1310.8" cy="258.9" rx="0.82" ry="0.44" fill="#c98f3e" opacity="0.75" transform="rotate(-30 1310.8 258.9)"/><ellipse cx="1323.5" cy="253.3" rx="1.25" ry="0.67" fill="#c98f3e" opacity="0.75" transform="rotate(-30 1323.5 253.3)"/><ellipse cx="1337.3" cy="246.1" rx="1.29" ry="0.69" fill="#c98f3e" opacity="0.75" transform="rotate(-30 1337.3 246.1)"/><ellipse cx="1357.2" cy="236.3" rx="1.38" ry="0.73" fill="#c98f3e" opacity="0.75" transform="rotate(-30 1357.2 236.3)"/><ellipse cx="1367.3" cy="229.9" rx="0.97" ry="0.52" fill="#c98f3e" opacity="0.75" transform="rotate(-30 1367.3 229.9)"/><ellipse cx="1384.3" cy="220.8" rx="1.40" ry="0.75" fill="#c98f3e" opacity="0.75" transform="rotate(-30 1384.3 220.8)"/><ellipse cx="1313.3" cy="272.0" rx="1.32" ry="0.70" fill="#c98f3e" opacity="0.75" transform="rotate(-30 1313.3 272.0)"/><ellipse cx="1325.7" cy="263.7" rx="0.85" ry="0.45" fill="#c98f3e" opacity="0.75" transform="rotate(-30 1325.7 263.7)"/><ellipse cx="1333.5" cy="259.1" rx="0.93" ry="0.50" fill="#c98f3e" opacity="0.75" transform="rotate(-30 1333.5 259.1)"/><ellipse cx="1350.8" cy="249.4" rx="0.84" ry="0.45" fill="#c98f3e" opacity="0.75" transform="rotate(-30 1350.8 249.4)"/><ellipse cx="1359.9" cy="244.8" rx="0.85" ry="0.46" fill="#c98f3e" opacity="0.75" transform="rotate(-30 1359.9 244.8)"/><ellipse cx="1381.5" cy="232.8" rx="1.41" ry="0.75" fill="#c98f3e" opacity="0.75" transform="rotate(-30 1381.5 232.8)"/><ellipse cx="1390.9" cy="229.8" rx="1.09" ry="0.58" fill="#c98f3e" opacity="0.75" transform="rotate(-30 1390.9 229.8)"/><ellipse cx="1397.0" cy="224.7" rx="1.50" ry="0.80" fill="#c98f3e" opacity="0.75" transform="rotate(-30 1397.0 224.7)"/><ellipse cx="1354.2" cy="262.0" rx="1.24" ry="0.66" fill="#c98f3e" opacity="0.75" transform="rotate(-30 1354.2 262.0)"/><ellipse cx="1376.6" cy="248.2" rx="1.33" ry="0.71" fill="#c98f3e" opacity="0.75" transform="rotate(-30 1376.6 248.2)"/><ellipse cx="1384.6" cy="243.2" rx="1.28" ry="0.68" fill="#c98f3e" opacity="0.75" transform="rotate(-30 1384.6 243.2)"/><ellipse cx="1398.5" cy="236.8" rx="1.12" ry="0.60" fill="#c98f3e" opacity="0.75" transform="rotate(-30 1398.5 236.8)"/><ellipse cx="1409.4" cy="229.8" rx="0.93" ry="0.50" fill="#c98f3e" opacity="0.75" transform="rotate(-30 1409.4 229.8)"/><ellipse cx="1360.3" cy="272.1" rx="1.12" ry="0.60" fill="#c98f3e" opacity="0.75" transform="rotate(-30 1360.3 272.1)"/><ellipse cx="1373.8" cy="264.8" rx="1.19" ry="0.64" fill="#c98f3e" opacity="0.75" transform="rotate(-30 1373.8 264.8)"/><ellipse cx="1390.3" cy="254.8" rx="1.02" ry="0.55" fill="#c98f3e" opacity="0.75" transform="rotate(-30 1390.3 254.8)"/><ellipse cx="1409.3" cy="243.4" rx="0.95" ry="0.51" fill="#c98f3e" opacity="0.75" transform="rotate(-30 1409.3 243.4)"/><ellipse cx="1382.7" cy="273.7" rx="0.91" ry="0.49" fill="#c98f3e" opacity="0.75" transform="rotate(-30 1382.7 273.7)"/><ellipse cx="1405.1" cy="260.0" rx="1.13" ry="0.60" fill="#c98f3e" opacity="0.75" transform="rotate(-30 1405.1 260.0)"/><ellipse cx="1424.1" cy="246.1" rx="1.45" ry="0.77" fill="#c98f3e" opacity="0.75" transform="rotate(-30 1424.1 246.1)"/><ellipse cx="1393.8" cy="283.5" rx="0.83" ry="0.44" fill="#c98f3e" opacity="0.75" transform="rotate(-30 1393.8 283.5)"/><ellipse cx="1409.5" cy="270.8" rx="1.11" ry="0.59" fill="#c98f3e" opacity="0.75" transform="rotate(-30 1409.5 270.8)"/><ellipse cx="1421.8" cy="263.1" rx="1.47" ry="0.78" fill="#c98f3e" opacity="0.75" transform="rotate(-30 1421.8 263.1)"/><ellipse cx="1430.2" cy="257.9" rx="0.86" ry="0.46" fill="#c98f3e" opacity="0.75" transform="rotate(-30 1430.2 257.9)"/><ellipse cx="1448.2" cy="246.0" rx="1.09" ry="0.58" fill="#c98f3e" opacity="0.75" transform="rotate(-30 1448.2 246.0)"/><ellipse cx="1407.1" cy="291.2" rx="1.35" ry="0.72" fill="#c98f3e" opacity="0.75" transform="rotate(-30 1407.1 291.2)"/><ellipse cx="1418.4" cy="282.2" rx="1.08" ry="0.57" fill="#c98f3e" opacity="0.75" transform="rotate(-30 1418.4 282.2)"/><ellipse cx="1431.0" cy="273.0" rx="0.99" ry="0.53" fill="#c98f3e" opacity="0.75" transform="rotate(-30 1431.0 273.0)"/><ellipse cx="1440.5" cy="267.8" rx="1.39" ry="0.74" fill="#c98f3e" opacity="0.75" transform="rotate(-30 1440.5 267.8)"/><ellipse cx="1458.8" cy="253.0" rx="0.80" ry="0.43" fill="#c98f3e" opacity="0.75" transform="rotate(-30 1458.8 253.0)"/><polygon points="1331.2,261.9 1397.0,297.3 1396.5,301.3 1331.2,265.6" fill="#176b1a" /><polygon points="1397.0,297.3 1397.8,296.7 1397.2,300.7 1396.5,301.3" fill="#176b1a" /><polygon points="1331.2,261.9 1332.0,261.5 1397.8,296.7 1397.0,297.3" fill="#176b1a" /><polygon points="1329.9,265.8 1395.3,301.6 1395.2,302.2 1329.9,266.3" fill="#2c9428" /><polygon points="1395.3,301.6 1398.6,299.2 1398.5,299.8 1395.2,302.2" fill="#2f9a2a" /><polygon points="1329.9,265.8 1333.3,264.0 1398.6,299.2 1395.3,301.6" fill="#2f9a2a" /><polygon points="1334.4,268.2 1336.6,269.4 1336.5,273.5 1334.4,272.3" fill="#d1b163" /><polygon points="1336.6,269.4 1340.7,267.0 1340.6,271.2 1336.5,273.5" fill="#d1b163" /><polygon points="1334.4,268.2 1338.5,265.9 1340.7,267.0 1336.6,269.4" fill="#fcf9df" /><polygon points="1347.1,275.1 1349.4,276.4 1349.2,280.6 1347.0,279.3" fill="#d1b163" /><polygon points="1349.4,276.4 1353.5,273.9 1353.3,278.1 1349.2,280.6" fill="#d1b163" /><polygon points="1347.1,275.1 1351.2,272.7 1353.5,273.9 1349.4,276.4" fill="#fcf9df" /><polygon points="1360.5,282.5 1362.9,283.8 1362.6,288.0 1360.3,286.7" fill="#d1b163" /><polygon points="1362.9,283.8 1367.0,281.2 1366.7,285.4 1362.6,288.0" fill="#d1b163" /><polygon points="1360.5,282.5 1364.6,279.9 1367.0,281.2 1362.9,283.8" fill="#fcf9df" /><polygon points="1374.6,290.2 1377.2,291.6 1376.8,295.9 1374.3,294.5" fill="#d1b163" /><polygon points="1377.2,291.6 1381.2,288.8 1380.8,293.1 1376.8,295.9" fill="#d1b163" /><polygon points="1374.6,290.2 1378.7,287.5 1381.2,288.8 1377.2,291.6" fill="#fcf9df" /><polygon points="1389.6,298.4 1392.3,299.8 1391.7,304.2 1389.1,302.8" fill="#d1b163" /><polygon points="1392.3,299.8 1396.3,296.9 1395.7,301.3 1391.7,304.2" fill="#d1b163" /><polygon points="1389.6,298.4 1393.6,295.5 1396.3,296.9 1392.3,299.8" fill="#fcf9df" /><polygon points="1329.9,262.0 1395.8,297.6 1395.7,298.3 1329.9,262.7" fill="#66cc3a" /><polygon points="1395.8,297.6 1399.1,295.2 1399.0,295.9 1395.7,298.3" fill="#78dc46" /><polygon points="1329.9,262.0 1333.3,260.2 1399.1,295.2 1395.8,297.6" fill="#84e24e" /></g>
<rect x="1057" y="93" width="543" height="1" fill="#c9dcf3"/><rect x="1286" y="93.6" width="83" height="13.2" fill="#c9d9ee" stroke="#d3e0f1" stroke-width="0.7"/>
<path d="M1098.8 401.8 l11.2 6 v12.4 l-11.2 6.2 l-11.2-6.2 v-12.4z M1098.8 426.4 v-12 l11.2-6.4 M1098.8 414.4 l-11.2-6.6" fill="none" stroke="#dcc4d0" stroke-width="0.6" stroke-dasharray="1 1.6"/>
<path d="M1099 382 v25" stroke="#1414c8" stroke-width="1.7"/><path d="M1084.2 404.9 l7.8 4.6" stroke="#18a018" stroke-width="1.25"/><path d="M1113.6 404.9 l-7.8 4.6" stroke="#d01818" stroke-width="1.25"/>
<path d="M1099 406.2 l7.2 4 l-7.2 3.4 l-7.2-3.4z" fill="#0a0ad8"/><path d="M1091.8 410.2 l7.2 3.4 v8 l-6.4-3.4z" fill="#f27878"/><path d="M1106.2 410.2 l-7.2 3.4 v8 l6.4-3.4z" fill="#62e462"/>
<circle cx="1066.5" cy="455.3" r="4.3" fill="none" stroke="#2a3a98" stroke-width="1.5" stroke-dasharray="1.5 1.88"/><rect x="1065.2" y="454.0" width="2.6" height="2.6" fill="#c8c8d8" opacity="0.85"/><path d="M1065.2 460.5 l1.3-2 l1.3 2z" fill="#c01828"/>
<rect x="1057" y="465.5" width="543" height="1.5" fill="#b2b2b2"/>
<rect x="1272" y="468" width="112" height="12.8" fill="#f5f7fb" stroke="#dde3ec" stroke-width="0.7"/>
<path d="M1599 577.3 H1089.4 q-0.8 0 -0.8 0.8 V587.6 q0 0.8 0.8 0.8 H1599" fill="#fff" stroke="#5c5c5c" stroke-width="0.95"/>
<rect x="1162.8" y="577.3" width="11.6" height="146" rx="0.8" fill="#fff" stroke="#5c5c5c" stroke-width="0.95"/>
<path d="M1162.8 588.2 h11.6" stroke="#333" stroke-width="1.1"/><path d="M1162.8 717.3 h11.6" stroke="#5c5c5c" stroke-width="0.8"/>
<path d="M1363.3 577.3 v11.1" stroke="#777" stroke-width="0.9"/><path d="M1373.8 577.3 v11.1" stroke="#333" stroke-width="1"/>
<path d="M1451.8 577.6 h12.2 M1451.8 588 h12.2" stroke="#111" stroke-width="1.3"/><path d="M1457.9 577.6 v10.4" stroke="#111" stroke-width="1.9"/>
<path d="M1076 787 h15" stroke="#f0a0a0" stroke-width="0.8" stroke-dasharray="1 1"/><path d="M1094.7 792 v14" stroke="#a0a0f0" stroke-width="0.8" stroke-dasharray="1 1"/>
<rect x="1087.6" y="779.6" width="14.4" height="14.4" fill="none" stroke="#c4c4d4" stroke-width="0.6" stroke-dasharray="1 1.2"/>
<path d="M1094.7 757.6 v25" stroke="#1414c8" stroke-width="1.5"/><path d="M1099 787 h24.6" stroke="#d01818" stroke-width="1.4"/>
<rect x="1090.2" y="782.4" width="9.2" height="9.2" fill="#4be04b"/>
<circle cx="1066.5" cy="829.0" r="4.3" fill="none" stroke="#2a3a98" stroke-width="1.5" stroke-dasharray="1.5 1.88"/><rect x="1065.2" y="827.7" width="2.6" height="2.6" fill="#c8c8d8" opacity="0.85"/><path d="M1065.2 834.2 l1.3-2 l1.3 2z" fill="#c01828"/>
<text x="706.0" y="10.0" font-size="7.7" fill="#2a2a2a" font-weight="normal" textLength="258.5" lengthAdjust="spacingAndGlyphs">Allplan 2024 - IP 2024 001 (AddIN Fertig) - Erdgeschoss:TB32 - Decke über EG</text>
<text x="6.8" y="26.0" font-size="8.4" fill="#202020" font-weight="normal" textLength="17.2" lengthAdjust="spacingAndGlyphs">Datei</text>
<text x="34.8" y="26.0" font-size="8.4" fill="#202020" font-weight="normal" textLength="34.8" lengthAdjust="spacingAndGlyphs">Bearbeiten</text>
<text x="80.8" y="26.0" font-size="8.4" fill="#202020" font-weight="normal" textLength="24.4" lengthAdjust="spacingAndGlyphs">Ansicht</text>
<text x="116.4" y="26.0" font-size="8.4" fill="#202020" font-weight="normal" textLength="28.4" lengthAdjust="spacingAndGlyphs">Einfügen</text>
<text x="156.0" y="26.0" font-size="8.4" fill="#202020" font-weight="normal" textLength="24.0" lengthAdjust="spacingAndGlyphs">Format</text>
<text x="191.2" y="26.0" font-size="8.4" fill="#202020" font-weight="normal" textLength="19.2" lengthAdjust="spacingAndGlyphs">Extras</text>
<text x="221.6" y="26.0" font-size="8.4" fill="#202020" font-weight="normal" textLength="30.4" lengthAdjust="spacingAndGlyphs">Erzeugen</text>
<text x="262.8" y="26.0" font-size="8.4" fill="#202020" font-weight="normal" textLength="24.4" lengthAdjust="spacingAndGlyphs">Ändern</text>
<text x="298.0" y="26.0" font-size="8.4" fill="#202020" font-weight="normal" textLength="42.0" lengthAdjust="spacingAndGlyphs">Wiederholen</text>
<text x="351.2" y="26.0" font-size="8.4" fill="#202020" font-weight="normal" textLength="24.0" lengthAdjust="spacingAndGlyphs">Fenster</text>
<text x="386.4" y="26.0" font-size="8.4" fill="#202020" font-weight="normal" textLength="3.4" lengthAdjust="spacingAndGlyphs">?</text>
<text x="35.2" y="43.2" font-size="7.7" fill="#262626" font-weight="normal" textLength="41.2" lengthAdjust="spacingAndGlyphs">Dachfertigung</text>
<text x="89.6" y="43.2" font-size="7.7" fill="#262626" font-weight="normal" textLength="43.6" lengthAdjust="spacingAndGlyphs">Wandfertigung</text>
<text x="146.4" y="43.2" font-size="7.7" fill="#262626" font-weight="normal" textLength="37.6" lengthAdjust="spacingAndGlyphs">Konstruktion</text>
<text x="196.8" y="43.2" font-size="7.7" fill="#262626" font-weight="normal" textLength="42.0" lengthAdjust="spacingAndGlyphs">Listenausgabe</text>
<text x="251.2" y="43.2" font-size="7.7" fill="#262626" font-weight="normal" textLength="31.2" lengthAdjust="spacingAndGlyphs">Im-/Export</text>
<text x="295.6" y="43.2" font-size="7.7" fill="#262626" font-weight="normal" textLength="11.6" lengthAdjust="spacingAndGlyphs">Info</text>
<text x="92.8" y="89.9" font-size="6.3" fill="#4c5868" font-weight="normal" textLength="36.4" lengthAdjust="spacingAndGlyphs">Wandfertigung</text>
<text x="238.4" y="89.9" font-size="6.3" fill="#4c5868" font-weight="normal" textLength="17.6" lengthAdjust="spacingAndGlyphs">Ändern</text>
<text x="352.0" y="89.9" font-size="6.3" fill="#4c5868" font-weight="normal" textLength="25.6" lengthAdjust="spacingAndGlyphs">Bearbeiten</text>
<text x="433.2" y="89.9" font-size="6.3" fill="#4c5868" font-weight="normal" textLength="18.8" lengthAdjust="spacingAndGlyphs">Messen</text>
<text x="462.8" y="89.9" font-size="6.3" fill="#4c5868" font-weight="normal" textLength="34.4" lengthAdjust="spacingAndGlyphs">Auswertungen</text>
<text x="507.2" y="89.9" font-size="6.3" fill="#4c5868" font-weight="normal" textLength="20.8" lengthAdjust="spacingAndGlyphs">Attribute</text>
<text x="538.8" y="89.9" font-size="6.3" fill="#4c5868" font-weight="normal" textLength="11.6" lengthAdjust="spacingAndGlyphs">Filter</text>
<text x="560.8" y="89.9" font-size="6.3" fill="#4c5868" font-weight="normal" textLength="43.2" lengthAdjust="spacingAndGlyphs">Arbeitsumgebung</text>
<text x="1438.8" y="9.7" font-size="7.6" fill="#2a2a2a" font-weight="normal" textLength="18.7" lengthAdjust="spacingAndGlyphs">Login</text>
<text x="1493.6" y="9.3" font-size="7" fill="#2b55a0" font-weight="bold" textLength="4.0" lengthAdjust="spacingAndGlyphs">?</text>
<text x="5" y="851.0" font-size="7.6" fill="#0c0c0c" stroke="#0c0c0c" stroke-width="0.28" textLength="295" lengthAdjust="spacingAndGlyphs">Klick links zum Auswählen, Strg+Klick zum Hinzufügen, Umschalt+Klick zur Segmentwahl</text>
<text x="3.0" y="867.9" font-size="7.6" fill="#666666" font-weight="normal" textLength="117.5" lengthAdjust="spacingAndGlyphs">Drücken Sie F1, um Hilfe zu erhalten.</text>
<text x="966.5" y="867.7" font-size="7.6" fill="#707070" font-weight="normal" textLength="20.0" lengthAdjust="spacingAndGlyphs">Land:</text>
<text x="989.5" y="867.7" font-size="7.6" fill="#707070" font-weight="normal" textLength="38.7" lengthAdjust="spacingAndGlyphs">Deutschland</text>
<text x="1082.9" y="867.7" font-size="7.6" fill="#707070" font-weight="normal" textLength="49.8" lengthAdjust="spacingAndGlyphs">Zeichnungstyp:</text>
<text x="1136.2" y="867.7" font-size="7.6" fill="#222" font-weight="normal" textLength="66.9" lengthAdjust="spacingAndGlyphs">Maßstabs-Definition</text>
<text x="1290.6" y="867.7" font-size="7.6" fill="#707070" font-weight="normal" textLength="30.2" lengthAdjust="spacingAndGlyphs">Maßstab:</text>
<text x="1324.8" y="867.7" font-size="7.6" fill="#222" font-weight="normal" textLength="22.2" lengthAdjust="spacingAndGlyphs">1 : 100</text>
<text x="1368.5" y="867.7" font-size="7.6" fill="#707070" font-weight="normal" textLength="20.5" lengthAdjust="spacingAndGlyphs">Länge:</text>
<text x="1393.0" y="867.7" font-size="7.6" fill="#222" font-weight="normal" textLength="10.0" lengthAdjust="spacingAndGlyphs">cm</text>
<text x="1423.6" y="867.7" font-size="7.6" fill="#707070" font-weight="normal" textLength="23.2" lengthAdjust="spacingAndGlyphs">Winkel:</text>
<text x="1450.3" y="867.7" font-size="7.6" fill="#222" font-weight="normal" textLength="19.3" lengthAdjust="spacingAndGlyphs">0.000</text>
<text x="1481.0" y="867.7" font-size="7.6" fill="#222" font-weight="normal" textLength="12.6" lengthAdjust="spacingAndGlyphs">deg</text>
<text x="1511.5" y="867.7" font-size="7.6" fill="#707070" font-weight="normal" textLength="6.5" lengthAdjust="spacingAndGlyphs">%:</text>
<text x="1523.8" y="867.7" font-size="7.6" fill="#707070" font-weight="normal" textLength="2.8" lengthAdjust="spacingAndGlyphs">1</text>
<text x="1552.7" y="867.7" font-size="7.6" fill="#222" font-weight="normal" textLength="41.5" lengthAdjust="spacingAndGlyphs">Notifications</text>
<text x="464.2" y="67.6" font-size="8.4" fill="#1f4a94" font-weight="bold" textLength="12.5" lengthAdjust="spacingAndGlyphs">Abc</text>
<text x="2.4" y="103.9" font-size="7.6" fill="#1a1a1a" font-weight="normal" textLength="16.9" lengthAdjust="spacingAndGlyphs">Layer</text>
<text x="4.3" y="119.3" font-size="7.6" fill="#1c1c1c" font-weight="normal" textLength="10.9" lengthAdjust="spacingAndGlyphs">Ei...</text>
<text x="26.2" y="119.3" font-size="7.6" fill="#1c1c1c" font-weight="normal" textLength="13.8" lengthAdjust="spacingAndGlyphs">As...</text>
<text x="48.8" y="119.3" font-size="7.6" fill="#1c1c1c" font-weight="normal" textLength="10.7" lengthAdjust="spacingAndGlyphs">Bi...</text>
<text x="70.7" y="119.3" font-size="7.6" fill="#1c1c1c" font-weight="normal" textLength="11.2" lengthAdjust="spacingAndGlyphs">O...</text>
<text x="92.8" y="119.3" font-size="7.6" fill="#1c1c1c" font-weight="normal" textLength="13.2" lengthAdjust="spacingAndGlyphs">Eb...</text>
<text x="114.7" y="119.3" font-size="7.6" fill="#1c1c1c" font-weight="normal" textLength="13.7" lengthAdjust="spacingAndGlyphs">Iss...</text>
<text x="136.7" y="119.3" font-size="7.6" fill="#1c1c1c" font-weight="normal" textLength="14.2" lengthAdjust="spacingAndGlyphs">Co...</text>
<text x="157.8" y="119.3" font-size="7.6" fill="#1c1c1c" font-weight="normal" textLength="16.3" lengthAdjust="spacingAndGlyphs">Lay...</text>
<text x="6.6" y="153.0" font-size="7.4" fill="#1c1c1c" font-weight="normal" textLength="20.1" lengthAdjust="spacingAndGlyphs">Status</text>
<text x="71.9" y="153.0" font-size="7.4" fill="#1c1c1c" font-weight="normal" textLength="32.8" lengthAdjust="spacingAndGlyphs">Kurzname</text>
<text x="175.0" y="153.0" font-size="7.4" fill="#1c1c1c" font-weight="normal">l</text>
<text x="71.2" y="166.5" font-size="7.4" fill="#1c1c1c" font-weight="normal" textLength="38.6" lengthAdjust="spacingAndGlyphs">STANDARD</text>
<text x="163.8" y="166.1" font-size="7.4" fill="#555" font-weight="normal" textLength="5.2" lengthAdjust="spacingAndGlyphs">...</text>
<text x="173.6" y="166.5" font-size="7.4" fill="#1c1c1c" font-weight="normal">S</text>
<text x="15.9" y="178.0" font-size="7.4" fill="#1c1c1c" font-weight="normal" textLength="73.4" lengthAdjust="spacingAndGlyphs">Dach-, Deckenbauteile</text>
<text x="15.9" y="213.0" font-size="7.4" fill="#1c1c1c" font-weight="normal" textLength="41.3" lengthAdjust="spacingAndGlyphs">Stahlbauteile</text>
<text x="71.6" y="190.1" font-size="7.4" fill="#1c1c1c" font-weight="normal" textLength="27.0" lengthAdjust="spacingAndGlyphs">HB_BLKL</text>
<text x="174.2" y="190.1" font-size="7.4" fill="#1c1c1c" font-weight="normal">E</text>
<text x="71.6" y="201.7" font-size="7.4" fill="#1c1c1c" font-weight="normal" textLength="39.6" lengthAdjust="spacingAndGlyphs">HB_SO_HOE</text>
<text x="174.2" y="201.7" font-size="7.4" fill="#1c1c1c" font-weight="normal">S</text>
<text x="71.6" y="225.1" font-size="7.4" fill="#1c1c1c" font-weight="normal" textLength="23.2" lengthAdjust="spacingAndGlyphs">HB_STT</text>
<text x="174.2" y="225.1" font-size="7.4" fill="#1c1c1c" font-weight="normal">S</text>
<rect x="177" y="144" width="1" height="84" fill="#8a8a8a"/><rect x="178" y="144" width="4" height="84" fill="#f0f0f0"/><rect x="176.6" y="144" width="2" height="12" fill="#f0f0f0"/>
<text x="597.7" y="103.2" font-size="8.8" fill="#9aa0a8" font-weight="normal" textLength="42.7" lengthAdjust="spacingAndGlyphs">Grundriss:1</text>
<text x="221.2" y="754.0" font-size="10.5" font-weight="bold" fill="#18a018" stroke="#18a018" stroke-width="0.3" text-anchor="middle">Y</text>
<text x="256.6" y="790.2" font-size="10.5" font-weight="bold" fill="#d01818" stroke="#d01818" stroke-width="0.3" text-anchor="middle">X</text>
<text x="211.2" y="800.6" font-size="10.5" font-weight="bold" fill="#1414c8" stroke="#1414c8" stroke-width="0.3" text-anchor="middle">Z</text>
<text x="1290.3" y="103.5" font-size="8.8" fill="#8594b2" font-weight="normal" textLength="75.1" lengthAdjust="spacingAndGlyphs">Zentralperspektive:3</text>
<text x="1098.7" y="379.8" font-size="10.5" font-weight="bold" fill="#1414c8" stroke="#1414c8" stroke-width="0.3" text-anchor="middle">Z</text>
<text x="1077.8" y="406.0" font-size="10" font-weight="bold" fill="#18a018" stroke="#18a018" stroke-width="0.3" text-anchor="middle">Y</text>
<text x="1119.2" y="406.0" font-size="10" font-weight="bold" fill="#d01818" stroke="#d01818" stroke-width="0.3" text-anchor="middle">X</text>
<text x="1276.3" y="477.6" font-size="8.8" fill="#9aa0a8" font-weight="normal" textLength="103.5" lengthAdjust="spacingAndGlyphs">Ansicht von vorne, Süden:2</text>
<text x="1094.6" y="754.9" font-size="10.2" font-weight="bold" fill="#1414c8" stroke="#1414c8" stroke-width="0.3" text-anchor="middle">Z</text>
<text x="1130.4" y="790.9" font-size="10.2" font-weight="bold" fill="#d01818" stroke="#d01818" stroke-width="0.3" text-anchor="middle">X</text>
<text x="1084.2" y="800.4" font-size="10.2" font-weight="bold" fill="#18a018" stroke="#18a018" stroke-width="0.3" text-anchor="middle">Y</text>
</svg>
</body></html>
